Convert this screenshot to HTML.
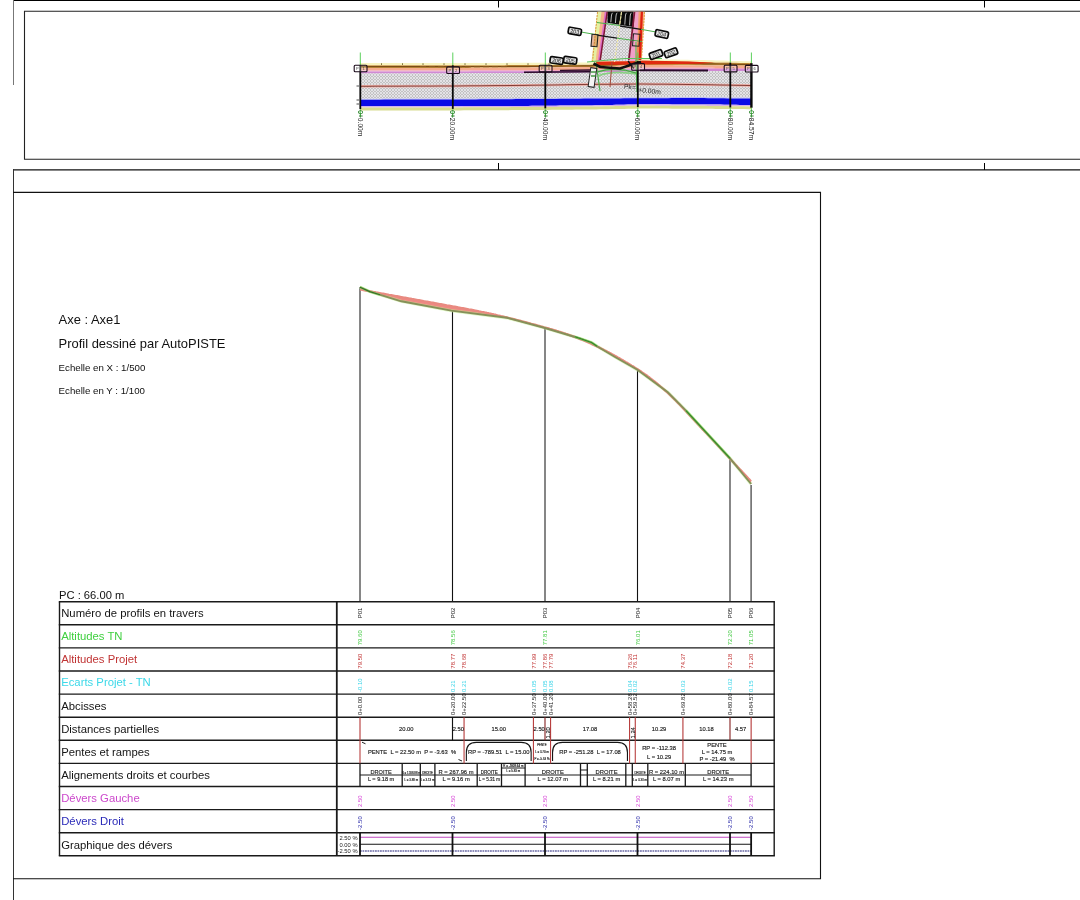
<!DOCTYPE html>
<html><head><meta charset="utf-8"><style>
html,body{margin:0;padding:0;background:#fff;width:1080px;height:900px;overflow:hidden}
svg{display:block;will-change:transform}
</style></head><body>
<svg width="1080" height="900" viewBox="0 0 1080 900">
<g fill="none" stroke="#000">
<line x1="13" y1="0.5" x2="1080" y2="0.5" stroke-width="1.2"/>
<line x1="13.5" y1="0" x2="13.5" y2="85" stroke="#777" stroke-width="1"/>
<polyline points="1080,11.3 24.5,11.3 24.5,159.3 1080,159.3" stroke="#222" stroke-width="1.1"/>
<line x1="498.5" y1="1" x2="498.5" y2="7.5" stroke-width="1"/>
<line x1="498.5" y1="163" x2="498.5" y2="170" stroke-width="1"/>
<line x1="984.5" y1="1" x2="984.5" y2="7.5" stroke-width="1"/>
<line x1="984.5" y1="163" x2="984.5" y2="170" stroke-width="1"/>
<line x1="13" y1="169.8" x2="1080" y2="169.8" stroke="#111" stroke-width="1.3"/>
<line x1="13.5" y1="169" x2="13.5" y2="900" stroke="#333" stroke-width="1"/>
<polyline points="13,192.4 820.5,192.4 820.5,878.8 13,878.8" stroke="#111" stroke-width="1.1"/>
</g>
<defs><pattern id="hatch" width="3" height="3" patternUnits="userSpaceOnUse"><rect width="3" height="3" fill="#c2c2c2"/><path d="M0,3 L3,0 M0,0 L3,3" stroke="#ecebf0" stroke-width="0.75"/></pattern></defs>
<polygon points="360.0,63.0 364.0,63.0 368.0,63.0 372.0,63.0 376.0,63.0 380.0,63.0 384.0,63.0 388.0,63.0 392.0,63.0 396.0,63.0 400.0,63.0 404.0,63.0 408.0,63.0 412.0,63.0 416.0,63.0 420.0,63.0 424.0,63.0 428.0,63.0 432.0,63.0 436.0,63.0 440.0,63.0 444.0,63.0 448.0,63.0 450.0,63.0 452.0,63.0 456.0,63.0 460.0,63.0 464.0,63.0 468.0,63.0 472.0,62.9 476.0,62.9 480.0,62.9 484.0,62.9 488.0,62.9 492.0,62.9 496.0,62.9 500.0,62.9 504.0,62.9 508.0,62.8 512.0,62.8 516.0,62.8 520.0,62.8 524.0,62.8 528.0,62.8 532.0,62.8 536.0,62.7 540.0,62.7 544.0,62.7 548.0,62.7 552.0,62.6 556.0,62.6 560.0,62.6 564.0,62.6 568.0,62.5 572.0,62.5 576.0,62.5 580.0,62.5 584.0,62.4 588.0,62.4 590.0,62.4 592.0,62.3 596.0,62.0 600.0,61.7 604.0,61.4 608.0,61.2 612.0,60.9 616.0,60.6 620.0,60.4 624.0,60.1 628.0,59.8 632.0,59.5 636.0,59.3 640.0,59.0 644.0,59.1 648.0,59.1 652.0,59.2 656.0,59.3 660.0,59.3 664.0,59.4 668.0,59.5 672.0,59.5 676.0,59.6 680.0,59.7 684.0,59.7 688.0,59.8 692.0,59.9 696.0,59.9 700.0,60.0 704.0,60.1 708.0,60.2 712.0,60.3 716.0,60.4 720.0,60.5 724.0,60.6 728.0,60.8 732.0,60.9 736.0,61.0 740.0,61.1 744.0,61.2 748.0,61.3 752.0,61.4 752.0,63.2 748.0,63.1 744.0,63.0 740.0,62.9 736.0,62.8 732.0,62.7 728.0,62.6 724.0,62.6 720.0,62.5 716.0,62.4 712.0,62.3 708.0,62.2 704.0,62.1 700.0,62.0 696.0,61.9 692.0,61.9 688.0,61.8 684.0,61.7 680.0,61.7 676.0,61.6 672.0,61.5 668.0,61.5 664.0,61.4 660.0,61.3 656.0,61.3 652.0,61.2 648.0,61.1 644.0,61.1 640.0,61.0 636.0,61.3 632.0,61.6 628.0,61.9 624.0,62.2 620.0,62.5 616.0,62.8 612.0,63.1 608.0,63.4 604.0,63.7 600.0,64.0 596.0,64.3 592.0,64.6 590.0,64.7 588.0,64.7 584.0,64.7 580.0,64.8 576.0,64.8 572.0,64.8 568.0,64.8 564.0,64.9 560.0,64.9 556.0,64.9 552.0,64.9 548.0,65.0 544.0,65.0 540.0,65.0 536.0,65.0 532.0,65.1 528.0,65.1 524.0,65.1 520.0,65.1 516.0,65.1 512.0,65.1 508.0,65.1 504.0,65.2 500.0,65.2 496.0,65.2 492.0,65.2 488.0,65.2 484.0,65.2 480.0,65.2 476.0,65.2 472.0,65.2 468.0,65.3 464.0,65.3 460.0,65.3 456.0,65.3 452.0,65.3 450.0,65.3 448.0,65.3 444.0,65.3 440.0,65.3 436.0,65.3 432.0,65.3 428.0,65.3 424.0,65.3 420.0,65.3 416.0,65.3 412.0,65.3 408.0,65.3 404.0,65.3 400.0,65.3 396.0,65.3 392.0,65.3 388.0,65.3 384.0,65.3 380.0,65.3 376.0,65.3 372.0,65.3 368.0,65.3 364.0,65.3 360.0,65.3" fill="#f8f4c0" />
<polygon points="360.0,65.3 364.0,65.3 368.0,65.3 372.0,65.3 376.0,65.3 380.0,65.3 384.0,65.3 388.0,65.3 392.0,65.3 396.0,65.3 400.0,65.3 404.0,65.3 408.0,65.3 412.0,65.3 416.0,65.3 420.0,65.3 424.0,65.3 428.0,65.3 432.0,65.3 436.0,65.3 440.0,65.3 444.0,65.3 448.0,65.3 450.0,65.3 452.0,65.3 456.0,65.3 460.0,65.3 464.0,65.3 468.0,65.3 472.0,65.2 476.0,65.2 480.0,65.2 484.0,65.2 488.0,65.2 492.0,65.2 496.0,65.2 500.0,65.2 504.0,65.2 508.0,65.1 512.0,65.1 516.0,65.1 520.0,65.1 524.0,65.1 528.0,65.1 532.0,65.1 536.0,65.0 540.0,65.0 544.0,65.0 548.0,65.0 552.0,64.9 556.0,64.9 560.0,64.9 564.0,64.9 568.0,64.8 572.0,64.8 576.0,64.8 580.0,64.8 584.0,64.7 588.0,64.7 590.0,64.7 592.0,64.6 596.0,64.3 600.0,64.0 604.0,63.7 608.0,63.4 612.0,63.1 616.0,62.8 620.0,62.5 624.0,62.2 628.0,61.9 632.0,61.6 636.0,61.3 640.0,61.0 644.0,61.1 648.0,61.1 652.0,61.2 656.0,61.3 660.0,61.3 664.0,61.4 668.0,61.5 672.0,61.5 676.0,61.6 680.0,61.7 684.0,61.7 688.0,61.8 692.0,61.9 696.0,61.9 700.0,62.0 704.0,62.1 708.0,62.2 712.0,62.3 716.0,62.4 720.0,62.5 724.0,62.6 728.0,62.6 732.0,62.7 736.0,62.8 740.0,62.9 744.0,63.0 748.0,63.1 752.0,63.2 752.0,65.8 748.0,65.8 744.0,65.7 740.0,65.7 736.0,65.7 732.0,65.6 728.0,65.6 724.0,65.6 720.0,65.6 716.0,65.5 712.0,65.5 708.0,65.5 704.0,65.4 700.0,65.4 696.0,65.4 692.0,65.3 688.0,65.3 684.0,65.2 680.0,65.2 676.0,65.2 672.0,65.1 668.0,65.1 664.0,65.0 660.0,65.0 656.0,65.0 652.0,64.9 648.0,64.9 644.0,64.8 640.0,64.8 636.0,65.0 632.0,65.2 628.0,65.3 624.0,65.5 620.0,65.7 616.0,65.9 612.0,66.0 608.0,66.2 604.0,66.4 600.0,66.6 596.0,66.7 592.0,66.9 590.0,67.0 588.0,67.0 584.0,67.1 580.0,67.1 576.0,67.1 572.0,67.2 568.0,67.2 564.0,67.3 560.0,67.3 556.0,67.4 552.0,67.4 548.0,67.4 544.0,67.5 540.0,67.5 536.0,67.6 532.0,67.6 528.0,67.7 524.0,67.7 520.0,67.7 516.0,67.7 512.0,67.7 508.0,67.7 504.0,67.8 500.0,67.8 496.0,67.8 492.0,67.8 488.0,67.8 484.0,67.8 480.0,67.8 476.0,67.8 472.0,67.8 468.0,67.9 464.0,67.9 460.0,67.9 456.0,67.9 452.0,67.9 450.0,67.9 448.0,67.9 444.0,67.9 440.0,67.9 436.0,67.9 432.0,67.9 428.0,67.9 424.0,67.9 420.0,67.9 416.0,67.9 412.0,67.9 408.0,67.9 404.0,67.9 400.0,67.9 396.0,67.9 392.0,67.9 388.0,67.9 384.0,67.9 380.0,67.9 376.0,67.9 372.0,67.9 368.0,67.9 364.0,67.9 360.0,67.9" fill="#c89440" />
<polygon points="360.0,67.9 364.0,67.9 368.0,67.9 372.0,67.9 376.0,67.9 380.0,67.9 384.0,67.9 388.0,67.9 392.0,67.9 396.0,67.9 400.0,67.9 404.0,67.9 408.0,67.9 412.0,67.9 416.0,67.9 420.0,67.9 424.0,67.9 428.0,67.9 432.0,67.9 436.0,67.9 440.0,67.9 444.0,67.9 448.0,67.9 450.0,67.9 452.0,67.9 456.0,67.9 460.0,67.9 464.0,67.9 468.0,67.9 472.0,67.8 476.0,67.8 480.0,67.8 484.0,67.8 488.0,67.8 492.0,67.8 496.0,67.8 500.0,67.8 504.0,67.8 508.0,67.7 512.0,67.7 516.0,67.7 520.0,67.7 524.0,67.7 528.0,67.7 532.0,67.6 536.0,67.6 540.0,67.5 544.0,67.5 548.0,67.4 552.0,67.4 556.0,67.4 560.0,67.3 564.0,67.3 568.0,67.2 572.0,67.2 576.0,67.1 580.0,67.1 584.0,67.1 588.0,67.0 590.0,67.0 592.0,66.9 596.0,66.7 600.0,66.6 604.0,66.4 608.0,66.2 612.0,66.0 616.0,65.9 620.0,65.7 624.0,65.5 628.0,65.3 632.0,65.2 636.0,65.0 640.0,64.8 644.0,64.8 648.0,64.9 652.0,64.9 656.0,65.0 660.0,65.0 664.0,65.0 668.0,65.1 672.0,65.1 676.0,65.2 680.0,65.2 684.0,65.2 688.0,65.3 692.0,65.3 696.0,65.4 700.0,65.4 704.0,65.4 708.0,65.5 712.0,65.5 716.0,65.5 720.0,65.6 724.0,65.6 728.0,65.6 732.0,65.6 736.0,65.7 740.0,65.7 744.0,65.7 748.0,65.8 752.0,65.8 752.0,68.0 748.0,68.0 744.0,68.0 740.0,68.0 736.0,67.9 732.0,67.9 728.0,67.9 724.0,67.9 720.0,67.9 716.0,67.9 712.0,67.8 708.0,67.8 704.0,67.8 700.0,67.8 696.0,67.8 692.0,67.8 688.0,67.8 684.0,67.8 680.0,67.8 676.0,67.8 672.0,67.8 668.0,67.8 664.0,67.8 660.0,67.8 656.0,67.8 652.0,67.8 648.0,67.8 644.0,67.8 640.0,67.8 636.0,68.0 632.0,68.2 628.0,68.3 624.0,68.5 620.0,68.7 616.0,68.9 612.0,69.0 608.0,69.2 604.0,69.4 600.0,69.6 596.0,69.7 592.0,69.9 590.0,70.0 588.0,70.0 584.0,70.0 580.0,70.0 576.0,70.0 572.0,70.1 568.0,70.1 564.0,70.1 560.0,70.1 556.0,70.1 552.0,70.1 548.0,70.1 544.0,70.1 540.0,70.2 536.0,70.2 532.0,70.2 528.0,70.2 524.0,70.2 520.0,70.2 516.0,70.2 512.0,70.2 508.0,70.2 504.0,70.3 500.0,70.3 496.0,70.3 492.0,70.3 488.0,70.3 484.0,70.3 480.0,70.3 476.0,70.3 472.0,70.3 468.0,70.4 464.0,70.4 460.0,70.4 456.0,70.4 452.0,70.4 450.0,70.4 448.0,70.4 444.0,70.4 440.0,70.4 436.0,70.4 432.0,70.4 428.0,70.4 424.0,70.4 420.0,70.4 416.0,70.4 412.0,70.4 408.0,70.4 404.0,70.4 400.0,70.4 396.0,70.4 392.0,70.4 388.0,70.4 384.0,70.4 380.0,70.4 376.0,70.4 372.0,70.4 368.0,70.4 364.0,70.4 360.0,70.4" fill="#f6ac8e" />
<polygon points="360.0,70.4 364.0,70.4 368.0,70.4 372.0,70.4 376.0,70.4 380.0,70.4 384.0,70.4 388.0,70.4 392.0,70.4 396.0,70.4 400.0,70.4 404.0,70.4 408.0,70.4 412.0,70.4 416.0,70.4 420.0,70.4 424.0,70.4 428.0,70.4 432.0,70.4 436.0,70.4 440.0,70.4 444.0,70.4 448.0,70.4 450.0,70.4 452.0,70.4 456.0,70.4 460.0,70.4 464.0,70.4 468.0,70.4 472.0,70.3 476.0,70.3 480.0,70.3 484.0,70.3 488.0,70.3 492.0,70.3 496.0,70.3 500.0,70.3 504.0,70.3 508.0,70.2 512.0,70.2 516.0,70.2 520.0,70.2 524.0,70.2 528.0,70.2 532.0,70.2 536.0,70.2 540.0,70.2 544.0,70.1 548.0,70.1 552.0,70.1 556.0,70.1 560.0,70.1 564.0,70.1 568.0,70.1 572.0,70.1 576.0,70.0 580.0,70.0 584.0,70.0 588.0,70.0 590.0,70.0 592.0,69.9 596.0,69.7 600.0,69.6 604.0,69.4 608.0,69.2 612.0,69.0 616.0,68.9 620.0,68.7 624.0,68.5 628.0,68.3 632.0,68.2 636.0,68.0 640.0,67.8 644.0,67.8 648.0,67.8 652.0,67.8 656.0,67.8 660.0,67.8 664.0,67.8 668.0,67.8 672.0,67.8 676.0,67.8 680.0,67.8 684.0,67.8 688.0,67.8 692.0,67.8 696.0,67.8 700.0,67.8 704.0,67.8 708.0,67.8 712.0,67.8 716.0,67.9 720.0,67.9 724.0,67.9 728.0,67.9 732.0,67.9 736.0,67.9 740.0,68.0 744.0,68.0 748.0,68.0 752.0,68.0 752.0,69.0 748.0,69.0 744.0,69.0 740.0,69.0 736.0,68.9 732.0,68.9 728.0,68.9 724.0,68.9 720.0,68.9 716.0,68.9 712.0,68.8 708.0,68.8 704.0,68.8 700.0,68.8 696.0,68.8 692.0,68.8 688.0,68.8 684.0,68.8 680.0,68.8 676.0,68.8 672.0,68.8 668.0,68.8 664.0,68.8 660.0,68.8 656.0,68.8 652.0,68.8 648.0,68.8 644.0,68.8 640.0,68.8 636.0,69.0 632.0,69.2 628.0,69.3 624.0,69.5 620.0,69.7 616.0,69.9 612.0,70.0 608.0,70.2 604.0,70.4 600.0,70.6 596.0,70.7 592.0,70.9 590.0,71.0 588.0,71.0 584.0,71.0 580.0,71.0 576.0,71.0 572.0,71.1 568.0,71.1 564.0,71.1 560.0,71.1 556.0,71.1 552.0,71.1 548.0,71.1 544.0,71.1 540.0,71.2 536.0,71.2 532.0,71.2 528.0,71.2 524.0,71.2 520.0,71.2 516.0,71.2 512.0,71.2 508.0,71.2 504.0,71.3 500.0,71.3 496.0,71.3 492.0,71.3 488.0,71.3 484.0,71.3 480.0,71.3 476.0,71.3 472.0,71.3 468.0,71.4 464.0,71.4 460.0,71.4 456.0,71.4 452.0,71.4 450.0,71.4 448.0,71.4 444.0,71.4 440.0,71.4 436.0,71.4 432.0,71.4 428.0,71.4 424.0,71.4 420.0,71.4 416.0,71.4 412.0,71.4 408.0,71.4 404.0,71.4 400.0,71.4 396.0,71.4 392.0,71.4 388.0,71.4 384.0,71.4 380.0,71.4 376.0,71.4 372.0,71.4 368.0,71.4 364.0,71.4 360.0,71.4" fill="#f0a0c0" />
<polygon points="360.0,71.4 364.0,71.4 368.0,71.4 372.0,71.4 376.0,71.4 380.0,71.4 384.0,71.4 388.0,71.4 392.0,71.4 396.0,71.4 400.0,71.4 404.0,71.4 408.0,71.4 412.0,71.4 416.0,71.4 420.0,71.4 424.0,71.4 428.0,71.4 432.0,71.4 436.0,71.4 440.0,71.4 444.0,71.4 448.0,71.4 450.0,71.4 452.0,71.4 456.0,71.4 460.0,71.4 464.0,71.4 468.0,71.4 472.0,71.3 476.0,71.3 480.0,71.3 484.0,71.3 488.0,71.3 492.0,71.3 496.0,71.3 500.0,71.3 504.0,71.3 508.0,71.2 512.0,71.2 516.0,71.2 520.0,71.2 524.0,71.2 528.0,71.2 532.0,71.2 536.0,71.2 540.0,71.2 544.0,71.1 548.0,71.1 552.0,71.1 556.0,71.1 560.0,71.1 564.0,71.1 568.0,71.1 572.0,71.1 576.0,71.0 580.0,71.0 584.0,71.0 588.0,71.0 590.0,71.0 592.0,70.9 596.0,70.7 600.0,70.6 604.0,70.4 608.0,70.2 612.0,70.0 616.0,69.9 620.0,69.7 624.0,69.5 628.0,69.3 632.0,69.2 636.0,69.0 640.0,68.8 644.0,68.8 648.0,68.8 652.0,68.8 656.0,68.8 660.0,68.8 664.0,68.8 668.0,68.8 672.0,68.8 676.0,68.8 680.0,68.8 684.0,68.8 688.0,68.8 692.0,68.8 696.0,68.8 700.0,68.8 704.0,68.8 708.0,68.8 712.0,68.8 716.0,68.9 720.0,68.9 724.0,68.9 728.0,68.9 732.0,68.9 736.0,68.9 740.0,69.0 744.0,69.0 748.0,69.0 752.0,69.0 752.0,71.2 748.0,71.2 744.0,71.2 740.0,71.2 736.0,71.1 732.0,71.1 728.0,71.1 724.0,71.1 720.0,71.1 716.0,71.1 712.0,71.0 708.0,71.0 704.0,71.0 700.0,71.0 696.0,71.0 692.0,71.1 688.0,71.1 684.0,71.1 680.0,71.1 676.0,71.2 672.0,71.2 668.0,71.2 664.0,71.2 660.0,71.3 656.0,71.3 652.0,71.3 648.0,71.3 644.0,71.4 640.0,71.4 636.0,71.5 632.0,71.6 628.0,71.7 624.0,71.8 620.0,71.9 616.0,72.0 612.0,72.1 608.0,72.2 604.0,72.3 600.0,72.4 596.0,72.5 592.0,72.6 590.0,72.6 588.0,72.6 584.0,72.6 580.0,72.7 576.0,72.7 572.0,72.7 568.0,72.8 564.0,72.8 560.0,72.8 556.0,72.9 552.0,72.9 548.0,72.9 544.0,72.9 540.0,73.0 536.0,73.0 532.0,73.0 528.0,73.1 524.0,73.1 520.0,73.1 516.0,73.1 512.0,73.1 508.0,73.2 504.0,73.2 500.0,73.2 496.0,73.2 492.0,73.2 488.0,73.2 484.0,73.3 480.0,73.3 476.0,73.3 472.0,73.3 468.0,73.3 464.0,73.3 460.0,73.4 456.0,73.4 452.0,73.4 450.0,73.4 448.0,73.4 444.0,73.4 440.0,73.4 436.0,73.4 432.0,73.4 428.0,73.4 424.0,73.4 420.0,73.4 416.0,73.4 412.0,73.4 408.0,73.4 404.0,73.4 400.0,73.4 396.0,73.4 392.0,73.4 388.0,73.4 384.0,73.4 380.0,73.4 376.0,73.4 372.0,73.4 368.0,73.4 364.0,73.4 360.0,73.4" fill="#d08ad4" />
<polygon points="360.0,73.4 364.0,73.4 368.0,73.4 372.0,73.4 376.0,73.4 380.0,73.4 384.0,73.4 388.0,73.4 392.0,73.4 396.0,73.4 400.0,73.4 404.0,73.4 408.0,73.4 412.0,73.4 416.0,73.4 420.0,73.4 424.0,73.4 428.0,73.4 432.0,73.4 436.0,73.4 440.0,73.4 444.0,73.4 448.0,73.4 450.0,73.4 452.0,73.4 456.0,73.4 460.0,73.4 464.0,73.3 468.0,73.3 472.0,73.3 476.0,73.3 480.0,73.3 484.0,73.3 488.0,73.2 492.0,73.2 496.0,73.2 500.0,73.2 504.0,73.2 508.0,73.2 512.0,73.1 516.0,73.1 520.0,73.1 524.0,73.1 528.0,73.1 532.0,73.0 536.0,73.0 540.0,73.0 544.0,72.9 548.0,72.9 552.0,72.9 556.0,72.9 560.0,72.8 564.0,72.8 568.0,72.8 572.0,72.7 576.0,72.7 580.0,72.7 584.0,72.6 588.0,72.6 590.0,72.6 592.0,72.6 596.0,72.5 600.0,72.4 604.0,72.3 608.0,72.2 612.0,72.1 616.0,72.0 620.0,71.9 624.0,71.8 628.0,71.7 632.0,71.6 636.0,71.5 640.0,71.4 644.0,71.4 648.0,71.3 652.0,71.3 656.0,71.3 660.0,71.3 664.0,71.2 668.0,71.2 672.0,71.2 676.0,71.2 680.0,71.1 684.0,71.1 688.0,71.1 692.0,71.1 696.0,71.0 700.0,71.0 704.0,71.0 708.0,71.0 712.0,71.0 716.0,71.1 720.0,71.1 724.0,71.1 728.0,71.1 732.0,71.1 736.0,71.1 740.0,71.2 744.0,71.2 748.0,71.2 752.0,71.2 752.0,97.6 748.0,97.6 744.0,97.5 740.0,97.5 736.0,97.4 732.0,97.4 728.0,97.4 724.0,97.3 720.0,97.3 716.0,97.3 712.0,97.2 708.0,97.2 704.0,97.1 700.0,97.1 696.0,97.1 692.0,97.1 688.0,97.1 684.0,97.1 680.0,97.1 676.0,97.1 672.0,97.1 668.0,97.2 664.0,97.2 660.0,97.2 656.0,97.2 652.0,97.2 648.0,97.2 644.0,97.2 640.0,97.2 636.0,97.2 632.0,97.3 628.0,97.3 624.0,97.3 620.0,97.4 616.0,97.4 612.0,97.4 608.0,97.5 604.0,97.5 600.0,97.5 596.0,97.6 592.0,97.6 590.0,97.6 588.0,97.6 584.0,97.6 580.0,97.7 576.0,97.7 572.0,97.7 568.0,97.8 564.0,97.8 560.0,97.8 556.0,97.9 552.0,97.9 548.0,97.9 544.0,97.9 540.0,98.0 536.0,98.0 532.0,98.0 528.0,98.1 524.0,98.1 520.0,98.1 516.0,98.1 512.0,98.2 508.0,98.2 504.0,98.2 500.0,98.2 496.0,98.3 492.0,98.3 488.0,98.3 484.0,98.3 480.0,98.3 476.0,98.4 472.0,98.4 468.0,98.4 464.0,98.4 460.0,98.4 456.0,98.5 452.0,98.5 450.0,98.5 448.0,98.5 444.0,98.5 440.0,98.5 436.0,98.5 432.0,98.5 428.0,98.5 424.0,98.6 420.0,98.6 416.0,98.6 412.0,98.6 408.0,98.6 404.0,98.6 400.0,98.6 396.0,98.6 392.0,98.6 388.0,98.6 384.0,98.6 380.0,98.7 376.0,98.7 372.0,98.7 368.0,98.7 364.0,98.7 360.0,98.7" fill="url(#hatch)" />
<polygon points="360.0,98.7 364.0,98.7 368.0,98.7 372.0,98.7 376.0,98.7 380.0,98.7 384.0,98.6 388.0,98.6 392.0,98.6 396.0,98.6 400.0,98.6 404.0,98.6 408.0,98.6 412.0,98.6 416.0,98.6 420.0,98.6 424.0,98.6 428.0,98.5 432.0,98.5 436.0,98.5 440.0,98.5 444.0,98.5 448.0,98.5 450.0,98.5 452.0,98.5 456.0,98.5 460.0,98.4 464.0,98.4 468.0,98.4 472.0,98.4 476.0,98.4 480.0,98.3 484.0,98.3 488.0,98.3 492.0,98.3 496.0,98.3 500.0,98.2 504.0,98.2 508.0,98.2 512.0,98.2 516.0,98.1 520.0,98.1 524.0,98.1 528.0,98.1 532.0,98.0 536.0,98.0 540.0,98.0 544.0,97.9 548.0,97.9 552.0,97.9 556.0,97.9 560.0,97.8 564.0,97.8 568.0,97.8 572.0,97.7 576.0,97.7 580.0,97.7 584.0,97.6 588.0,97.6 590.0,97.6 592.0,97.6 596.0,97.6 600.0,97.5 604.0,97.5 608.0,97.5 612.0,97.4 616.0,97.4 620.0,97.4 624.0,97.3 628.0,97.3 632.0,97.3 636.0,97.2 640.0,97.2 644.0,97.2 648.0,97.2 652.0,97.2 656.0,97.2 660.0,97.2 664.0,97.2 668.0,97.2 672.0,97.1 676.0,97.1 680.0,97.1 684.0,97.1 688.0,97.1 692.0,97.1 696.0,97.1 700.0,97.1 704.0,97.1 708.0,97.2 712.0,97.2 716.0,97.3 720.0,97.3 724.0,97.3 728.0,97.4 732.0,97.4 736.0,97.4 740.0,97.5 744.0,97.5 748.0,97.6 752.0,97.6 752.0,98.6 748.0,98.6 744.0,98.5 740.0,98.5 736.0,98.4 732.0,98.4 728.0,98.4 724.0,98.3 720.0,98.3 716.0,98.3 712.0,98.2 708.0,98.2 704.0,98.1 700.0,98.1 696.0,98.1 692.0,98.1 688.0,98.1 684.0,98.1 680.0,98.1 676.0,98.1 672.0,98.1 668.0,98.2 664.0,98.2 660.0,98.2 656.0,98.2 652.0,98.2 648.0,98.2 644.0,98.2 640.0,98.2 636.0,98.2 632.0,98.3 628.0,98.3 624.0,98.3 620.0,98.4 616.0,98.4 612.0,98.4 608.0,98.5 604.0,98.5 600.0,98.5 596.0,98.6 592.0,98.6 590.0,98.6 588.0,98.6 584.0,98.6 580.0,98.7 576.0,98.7 572.0,98.7 568.0,98.8 564.0,98.8 560.0,98.8 556.0,98.9 552.0,98.9 548.0,98.9 544.0,98.9 540.0,99.0 536.0,99.0 532.0,99.0 528.0,99.1 524.0,99.1 520.0,99.1 516.0,99.1 512.0,99.2 508.0,99.2 504.0,99.2 500.0,99.2 496.0,99.3 492.0,99.3 488.0,99.3 484.0,99.3 480.0,99.3 476.0,99.4 472.0,99.4 468.0,99.4 464.0,99.4 460.0,99.4 456.0,99.5 452.0,99.5 450.0,99.5 448.0,99.5 444.0,99.5 440.0,99.5 436.0,99.5 432.0,99.5 428.0,99.5 424.0,99.6 420.0,99.6 416.0,99.6 412.0,99.6 408.0,99.6 404.0,99.6 400.0,99.6 396.0,99.6 392.0,99.6 388.0,99.6 384.0,99.6 380.0,99.7 376.0,99.7 372.0,99.7 368.0,99.7 364.0,99.7 360.0,99.7" fill="#b8b8f0" />
<polygon points="360.0,99.7 364.0,99.7 368.0,99.7 372.0,99.7 376.0,99.7 380.0,99.7 384.0,99.6 388.0,99.6 392.0,99.6 396.0,99.6 400.0,99.6 404.0,99.6 408.0,99.6 412.0,99.6 416.0,99.6 420.0,99.6 424.0,99.6 428.0,99.5 432.0,99.5 436.0,99.5 440.0,99.5 444.0,99.5 448.0,99.5 450.0,99.5 452.0,99.5 456.0,99.5 460.0,99.4 464.0,99.4 468.0,99.4 472.0,99.4 476.0,99.4 480.0,99.3 484.0,99.3 488.0,99.3 492.0,99.3 496.0,99.3 500.0,99.2 504.0,99.2 508.0,99.2 512.0,99.2 516.0,99.1 520.0,99.1 524.0,99.1 528.0,99.1 532.0,99.0 536.0,99.0 540.0,99.0 544.0,98.9 548.0,98.9 552.0,98.9 556.0,98.9 560.0,98.8 564.0,98.8 568.0,98.8 572.0,98.7 576.0,98.7 580.0,98.7 584.0,98.6 588.0,98.6 590.0,98.6 592.0,98.6 596.0,98.6 600.0,98.5 604.0,98.5 608.0,98.5 612.0,98.4 616.0,98.4 620.0,98.4 624.0,98.3 628.0,98.3 632.0,98.3 636.0,98.2 640.0,98.2 644.0,98.2 648.0,98.2 652.0,98.2 656.0,98.2 660.0,98.2 664.0,98.2 668.0,98.2 672.0,98.1 676.0,98.1 680.0,98.1 684.0,98.1 688.0,98.1 692.0,98.1 696.0,98.1 700.0,98.1 704.0,98.1 708.0,98.2 712.0,98.2 716.0,98.3 720.0,98.3 724.0,98.3 728.0,98.4 732.0,98.4 736.0,98.4 740.0,98.5 744.0,98.5 748.0,98.6 752.0,98.6 752.0,105.0 748.0,105.0 744.0,104.9 740.0,104.9 736.0,104.8 732.0,104.8 728.0,104.7 724.0,104.7 720.0,104.6 716.0,104.6 712.0,104.5 708.0,104.5 704.0,104.4 700.0,104.4 696.0,104.4 692.0,104.4 688.0,104.4 684.0,104.4 680.0,104.4 676.0,104.4 672.0,104.4 668.0,104.3 664.0,104.3 660.0,104.3 656.0,104.3 652.0,104.3 648.0,104.3 644.0,104.3 640.0,104.3 636.0,104.4 632.0,104.5 628.0,104.6 624.0,104.7 620.0,104.7 616.0,104.8 612.0,104.9 608.0,105.0 604.0,105.1 600.0,105.2 596.0,105.3 592.0,105.4 590.0,105.4 588.0,105.4 584.0,105.4 580.0,105.5 576.0,105.5 572.0,105.5 568.0,105.6 564.0,105.6 560.0,105.6 556.0,105.7 552.0,105.7 548.0,105.7 544.0,105.7 540.0,105.8 536.0,105.8 532.0,105.8 528.0,105.9 524.0,105.9 520.0,105.9 516.0,105.9 512.0,105.9 508.0,106.0 504.0,106.0 500.0,106.0 496.0,106.0 492.0,106.0 488.0,106.0 484.0,106.1 480.0,106.1 476.0,106.1 472.0,106.1 468.0,106.1 464.0,106.1 460.0,106.2 456.0,106.2 452.0,106.2 450.0,106.2 448.0,106.2 444.0,106.2 440.0,106.2 436.0,106.2 432.0,106.2 428.0,106.2 424.0,106.2 420.0,106.2 416.0,106.2 412.0,106.2 408.0,106.2 404.0,106.2 400.0,106.2 396.0,106.2 392.0,106.2 388.0,106.2 384.0,106.2 380.0,106.2 376.0,106.2 372.0,106.2 368.0,106.2 364.0,106.2 360.0,106.2" fill="#0a0ae6" />
<polygon points="360.0,106.2 364.0,106.2 368.0,106.2 372.0,106.2 376.0,106.2 380.0,106.2 384.0,106.2 388.0,106.2 392.0,106.2 396.0,106.2 400.0,106.2 404.0,106.2 408.0,106.2 412.0,106.2 416.0,106.2 420.0,106.2 424.0,106.2 428.0,106.2 432.0,106.2 436.0,106.2 440.0,106.2 444.0,106.2 448.0,106.2 450.0,106.2 452.0,106.2 456.0,106.2 460.0,106.2 464.0,106.1 468.0,106.1 472.0,106.1 476.0,106.1 480.0,106.1 484.0,106.1 488.0,106.0 492.0,106.0 496.0,106.0 500.0,106.0 504.0,106.0 508.0,106.0 512.0,105.9 516.0,105.9 520.0,105.9 524.0,105.9 528.0,105.9 532.0,105.8 536.0,105.8 540.0,105.8 544.0,105.7 548.0,105.7 552.0,105.7 556.0,105.7 560.0,105.6 564.0,105.6 568.0,105.6 572.0,105.5 576.0,105.5 580.0,105.5 584.0,105.4 588.0,105.4 590.0,105.4 592.0,105.4 596.0,105.3 600.0,105.2 604.0,105.1 608.0,105.0 612.0,104.9 616.0,104.8 620.0,104.7 624.0,104.7 628.0,104.6 632.0,104.5 636.0,104.4 640.0,104.3 644.0,104.3 648.0,104.3 652.0,104.3 656.0,104.3 660.0,104.3 664.0,104.3 668.0,104.3 672.0,104.4 676.0,104.4 680.0,104.4 684.0,104.4 688.0,104.4 692.0,104.4 696.0,104.4 700.0,104.4 704.0,104.4 708.0,104.5 712.0,104.5 716.0,104.6 720.0,104.6 724.0,104.7 728.0,104.7 732.0,104.8 736.0,104.8 740.0,104.9 744.0,104.9 748.0,105.0 752.0,105.0 752.0,106.4 748.0,106.4 744.0,106.3 740.0,106.3 736.0,106.2 732.0,106.2 728.0,106.1 724.0,106.1 720.0,106.0 716.0,106.0 712.0,105.9 708.0,105.9 704.0,105.8 700.0,105.8 696.0,105.8 692.0,105.8 688.0,105.8 684.0,105.7 680.0,105.7 676.0,105.7 672.0,105.7 668.0,105.7 664.0,105.7 660.0,105.7 656.0,105.7 652.0,105.6 648.0,105.6 644.0,105.6 640.0,105.6 636.0,105.7 632.0,105.8 628.0,105.8 624.0,105.9 620.0,106.0 616.0,106.1 612.0,106.2 608.0,106.2 604.0,106.3 600.0,106.4 596.0,106.5 592.0,106.6 590.0,106.6 588.0,106.6 584.0,106.6 580.0,106.7 576.0,106.7 572.0,106.7 568.0,106.8 564.0,106.8 560.0,106.8 556.0,106.9 552.0,106.9 548.0,106.9 544.0,106.9 540.0,107.0 536.0,107.0 532.0,107.0 528.0,107.1 524.0,107.1 520.0,107.1 516.0,107.1 512.0,107.1 508.0,107.2 504.0,107.2 500.0,107.2 496.0,107.2 492.0,107.2 488.0,107.2 484.0,107.3 480.0,107.3 476.0,107.3 472.0,107.3 468.0,107.3 464.0,107.3 460.0,107.4 456.0,107.4 452.0,107.4 450.0,107.4 448.0,107.4 444.0,107.4 440.0,107.4 436.0,107.4 432.0,107.4 428.0,107.4 424.0,107.4 420.0,107.4 416.0,107.4 412.0,107.4 408.0,107.4 404.0,107.4 400.0,107.4 396.0,107.4 392.0,107.4 388.0,107.4 384.0,107.4 380.0,107.4 376.0,107.4 372.0,107.4 368.0,107.4 364.0,107.4 360.0,107.4" fill="#d8b0e8" />
<polygon points="360.0,107.4 364.0,107.4 368.0,107.4 372.0,107.4 376.0,107.4 380.0,107.4 384.0,107.4 388.0,107.4 392.0,107.4 396.0,107.4 400.0,107.4 404.0,107.4 408.0,107.4 412.0,107.4 416.0,107.4 420.0,107.4 424.0,107.4 428.0,107.4 432.0,107.4 436.0,107.4 440.0,107.4 444.0,107.4 448.0,107.4 450.0,107.4 452.0,107.4 456.0,107.4 460.0,107.4 464.0,107.3 468.0,107.3 472.0,107.3 476.0,107.3 480.0,107.3 484.0,107.3 488.0,107.2 492.0,107.2 496.0,107.2 500.0,107.2 504.0,107.2 508.0,107.2 512.0,107.1 516.0,107.1 520.0,107.1 524.0,107.1 528.0,107.1 532.0,107.0 536.0,107.0 540.0,107.0 544.0,106.9 548.0,106.9 552.0,106.9 556.0,106.9 560.0,106.8 564.0,106.8 568.0,106.8 572.0,106.7 576.0,106.7 580.0,106.7 584.0,106.6 588.0,106.6 590.0,106.6 592.0,106.6 596.0,106.5 600.0,106.4 604.0,106.3 608.0,106.2 612.0,106.2 616.0,106.1 620.0,106.0 624.0,105.9 628.0,105.8 632.0,105.8 636.0,105.7 640.0,105.6 644.0,105.6 648.0,105.6 652.0,105.6 656.0,105.7 660.0,105.7 664.0,105.7 668.0,105.7 672.0,105.7 676.0,105.7 680.0,105.7 684.0,105.7 688.0,105.8 692.0,105.8 696.0,105.8 700.0,105.8 704.0,105.8 708.0,105.9 712.0,105.9 716.0,106.0 720.0,106.0 724.0,106.1 728.0,106.1 732.0,106.2 736.0,106.2 740.0,106.3 744.0,106.3 748.0,106.4 752.0,106.4 752.0,109.2 748.0,109.2 744.0,109.1 740.0,109.1 736.0,109.0 732.0,109.0 728.0,109.0 724.0,108.9 720.0,108.9 716.0,108.9 712.0,108.8 708.0,108.8 704.0,108.7 700.0,108.7 696.0,108.7 692.0,108.7 688.0,108.7 684.0,108.7 680.0,108.7 676.0,108.7 672.0,108.7 668.0,108.6 664.0,108.6 660.0,108.6 656.0,108.6 652.0,108.6 648.0,108.6 644.0,108.6 640.0,108.6 636.0,108.7 632.0,108.7 628.0,108.8 624.0,108.9 620.0,109.0 616.0,109.0 612.0,109.1 608.0,109.2 604.0,109.2 600.0,109.3 596.0,109.4 592.0,109.5 590.0,109.5 588.0,109.5 584.0,109.6 580.0,109.6 576.0,109.6 572.0,109.7 568.0,109.7 564.0,109.7 560.0,109.8 556.0,109.8 552.0,109.8 548.0,109.9 544.0,109.9 540.0,110.0 536.0,110.0 532.0,110.0 528.0,110.1 524.0,110.1 520.0,110.1 516.0,110.1 512.0,110.1 508.0,110.2 504.0,110.2 500.0,110.2 496.0,110.2 492.0,110.2 488.0,110.2 484.0,110.3 480.0,110.3 476.0,110.3 472.0,110.3 468.0,110.3 464.0,110.3 460.0,110.4 456.0,110.4 452.0,110.4 450.0,110.4 448.0,110.4 444.0,110.4 440.0,110.4 436.0,110.4 432.0,110.4 428.0,110.4 424.0,110.5 420.0,110.5 416.0,110.5 412.0,110.5 408.0,110.5 404.0,110.5 400.0,110.5 396.0,110.5 392.0,110.5 388.0,110.5 384.0,110.5 380.0,110.6 376.0,110.6 372.0,110.6 368.0,110.6 364.0,110.6 360.0,110.6" fill="#d8dc90" />
<polyline points="360.0,66.6 368.0,66.6 376.0,66.6 384.0,66.6 392.0,66.6 400.0,66.6 408.0,66.6 416.0,66.6 424.0,66.6 432.0,66.6 440.0,66.6 448.0,66.6 450.0,66.6 456.0,66.6 464.0,66.6 472.0,66.5 480.0,66.5 488.0,66.5 496.0,66.5 504.0,66.5 512.0,66.4 520.0,66.4 524.0,66.4 528.0,66.4 536.0,66.3 544.0,66.2 552.0,66.2 560.0,66.1 568.0,66.0 576.0,66.0 584.0,65.9 590.0,65.8 592.0,65.7 600.0,65.3 608.0,64.8 616.0,64.3 624.0,63.8 632.0,63.4 640.0,62.9 648.0,63.0 656.0,63.1 664.0,63.2 672.0,63.3 680.0,63.4 688.0,63.5 696.0,63.6 700.0,63.7 704.0,63.8 712.0,63.9 720.0,64.0 728.0,64.1 736.0,64.3 744.0,64.4 752.0,64.5" fill="none" stroke="#7a4c14" stroke-width="1.2" />
<polyline points="360.0,85.5 368.0,85.5 376.0,85.4 384.0,85.4 392.0,85.4 400.0,85.4 408.0,85.3 416.0,85.3 424.0,85.3 432.0,85.3 440.0,85.2 448.0,85.2 450.0,85.2 456.0,85.2 464.0,85.1 472.0,85.0 480.0,85.0 488.0,84.9 496.0,84.8 504.0,84.8 512.0,84.7 520.0,84.6 524.0,84.6 528.0,84.5 536.0,84.4 544.0,84.3 552.0,84.2 560.0,84.1 568.0,83.9 576.0,83.8 584.0,83.7 590.0,83.6 592.0,83.6 600.0,83.5 608.0,83.5 616.0,83.4 624.0,83.3 632.0,83.3 640.0,83.2 648.0,83.3 656.0,83.4 664.0,83.4 672.0,83.5 680.0,83.6 688.0,83.7 696.0,83.8 700.0,83.8 704.0,83.9 712.0,84.0 720.0,84.2 728.0,84.3 736.0,84.5 744.0,84.6 752.0,84.8" fill="none" stroke="#f0b0a8" stroke-width="1.0" />
<polyline points="360.0,87.1 368.0,87.1 376.0,87.0 384.0,87.0 392.0,87.0 400.0,87.0 408.0,86.9 416.0,86.9 424.0,86.9 432.0,86.9 440.0,86.8 448.0,86.8 450.0,86.8 456.0,86.8 464.0,86.7 472.0,86.6 480.0,86.6 488.0,86.5 496.0,86.4 504.0,86.4 512.0,86.3 520.0,86.2 524.0,86.2 528.0,86.1 536.0,86.0 544.0,85.9 552.0,85.8 560.0,85.7 568.0,85.5 576.0,85.4 584.0,85.3 590.0,85.2 592.0,85.2 600.0,85.1 608.0,85.1 616.0,85.0 624.0,84.9 632.0,84.9 640.0,84.8 648.0,84.9 656.0,85.0 664.0,85.0 672.0,85.1 680.0,85.2 688.0,85.3 696.0,85.4 700.0,85.4 704.0,85.5 712.0,85.6 720.0,85.8 728.0,85.9 736.0,86.1 744.0,86.2 752.0,86.4" fill="none" stroke="#f0b0a8" stroke-width="1.0" />
<polyline points="360.0,86.3 368.0,86.3 376.0,86.2 384.0,86.2 392.0,86.2 400.0,86.2 408.0,86.1 416.0,86.1 424.0,86.1 432.0,86.1 440.0,86.0 448.0,86.0 450.0,86.0 456.0,86.0 464.0,85.9 472.0,85.8 480.0,85.8 488.0,85.7 496.0,85.6 504.0,85.6 512.0,85.5 520.0,85.4 524.0,85.4 528.0,85.3 536.0,85.2 544.0,85.1 552.0,85.0 560.0,84.9 568.0,84.7 576.0,84.6 584.0,84.5 590.0,84.4 592.0,84.4 600.0,84.3 608.0,84.3 616.0,84.2 624.0,84.1 632.0,84.1 640.0,84.0 648.0,84.1 656.0,84.2 664.0,84.2 672.0,84.3 680.0,84.4 688.0,84.5 696.0,84.6 700.0,84.6 704.0,84.7 712.0,84.8 720.0,85.0 728.0,85.1 736.0,85.3 744.0,85.4 752.0,85.6" fill="none" stroke="#7a2c24" stroke-width="0.9" />
<polygon points="596,61 640,60.6 690,61.4 714,62.8 700,63.8 640,64.4 596,65" fill="#e02a10"/>
<polyline points="524,72.2 590,71.8" stroke="#2a0a2a" stroke-width="1.5" fill="none"/>
<polyline points="640,70.2 708,70.6" stroke="#2a0a2a" stroke-width="2" fill="none"/>
<line x1="381.5" y1="63.2" x2="381.5" y2="65" stroke="#6a5a2a" stroke-width="0.8"/>
<line x1="402.5" y1="63.2" x2="402.5" y2="65" stroke="#6a5a2a" stroke-width="0.8"/>
<line x1="423" y1="63.2" x2="423" y2="65" stroke="#6a5a2a" stroke-width="0.8"/>
<line x1="444" y1="63.2" x2="444" y2="65" stroke="#6a5a2a" stroke-width="0.8"/>
<line x1="465" y1="63.2" x2="465" y2="65" stroke="#6a5a2a" stroke-width="0.8"/>
<line x1="486" y1="63.2" x2="486" y2="65" stroke="#6a5a2a" stroke-width="0.8"/>
<line x1="507" y1="63.2" x2="507" y2="65" stroke="#6a5a2a" stroke-width="0.8"/>
<line x1="528" y1="63.2" x2="528" y2="65" stroke="#6a5a2a" stroke-width="0.8"/>
<line x1="549" y1="63.2" x2="549" y2="65" stroke="#6a5a2a" stroke-width="0.8"/>
<line x1="570" y1="63.2" x2="570" y2="65" stroke="#6a5a2a" stroke-width="0.8"/>
<polyline points="420,66.5 470,66.8 510,66.6" stroke="#8a5a20" stroke-width="1" stroke-dasharray="6,3" fill="none"/>
<polygon points="597.5,11.8 645,11.8 641.5,61 591.5,62" fill="#f6b48c"/>
<polygon points="597.5,11.8 601.5,11.8 595.5,62 591.5,62" fill="#e6f0a0"/>
<polygon points="604.8,11.8 607.2,11.8 600.2,61 597.8,61" fill="#e070c8"/>
<polygon points="607,11.8 635.5,11.8 629,61 600.5,61" fill="url(#hatch)"/>
<polygon points="635.5,11.8 639.5,11.8 636.5,61 629,61" fill="#f0a0c8"/>
<polygon points="640.5,11.8 643,11.8 641.2,60 636.2,60" fill="#e02010"/>
<polygon points="607.5,11.8 633.5,11.8 633.5,27 607.5,22.8" fill="#0a0a0a"/>
<path d="M612.6,12.8 Q611.6,13.5 611.4,16 L610.8,22.3" stroke="#e8e8e8" stroke-width="0.8" fill="none"/>
<path d="M617.2,12.8 Q616.2,13.5 616.0,16 L615.4,23.0" stroke="#e8e8e8" stroke-width="0.8" fill="none"/>
<path d="M626.6,12.8 Q625.6,13.5 625.4,16 L624.8,24.6" stroke="#e8e8e8" stroke-width="0.8" fill="none"/>
<path d="M631.4,12.8 Q630.4,13.5 630.2,16 L629.6,25.3" stroke="#e8e8e8" stroke-width="0.8" fill="none"/>
<line x1="607.2" y1="12" x2="600.2" y2="60" stroke="#801838" stroke-width="1.6"/>
<line x1="634.5" y1="12" x2="628.8" y2="60" stroke="#801838" stroke-width="1.8"/>
<line x1="621.5" y1="12" x2="614.5" y2="62" stroke="#f0e8a0" stroke-width="1.1" stroke-dasharray="3,1.5"/>
<line x1="621.5" y1="12" x2="619.3" y2="27" stroke="#e8e0a0" stroke-width="0.9"/>
<line x1="597.5" y1="12" x2="592.5" y2="62" stroke="#d89030" stroke-width="0.9" stroke-dasharray="2,1"/>
<line x1="644.5" y1="12" x2="641.5" y2="60" stroke="#e0a030" stroke-width="0.9" stroke-dasharray="2,1"/>
<line x1="636" y1="42" x2="636" y2="60" stroke="#6ac04a" stroke-width="1.2"/>
<polygon points="638.6,11.8 640.8,11.8 638.6,60 636.6,60" fill="#f4a060" opacity="0.8"/>
<polyline points="581,32 597,34.8" stroke="#4ab04a" stroke-width="1" fill="none"/>
<polyline points="597,35.2 617,38.2" stroke="#151515" stroke-width="1.3" fill="none"/>
<polyline points="617,38.2 642,41.5" stroke="#4ab04a" stroke-width="1" fill="none"/>
<polyline points="597,22.5 620,25.5" stroke="#4ab04a" stroke-width="1" fill="none"/>
<polyline points="620,26 641,29.3" stroke="#151515" stroke-width="1.3" fill="none"/>
<polyline points="641,29.3 656,32" stroke="#4ab04a" stroke-width="1" fill="none"/>
<polyline points="587,62 625,58.5 662,58.5" stroke="#5ac05a" stroke-width="1" fill="none"/>
<polyline points="596,62.5 600,91" stroke="#4ab04a" stroke-width="1.2" fill="none"/>
<polyline points="636,60 637,92" stroke="#4ab04a" stroke-width="1.2" fill="none"/>
<path d="M597,72 Q615,66 636,73" stroke="#78d070" stroke-width="2.2" fill="none" opacity="0.8"/>
<path d="M598,76 Q612,70 636,74" stroke="#78d070" stroke-width="1.6" fill="none" opacity="0.8"/>
<path d="M597,72 Q615,66 636,73" stroke="#3a9a3a" stroke-width="0.9" fill="none"/>
<polyline points="612,62 610,87" stroke="#a04838" stroke-width="1" fill="none"/>
<polyline points="593.5,63.5 600,67 620,68.5 635,63.5 641,62" stroke="#101010" stroke-width="2.6" fill="none"/>
<polyline points="560,70.3 592,70" stroke="#2a0a2a" stroke-width="1.3" fill="none"/>
<polyline points="628,61 634,68.5" stroke="#101010" stroke-width="1.3" fill="none"/>
<g transform="translate(574.8,31.3) rotate(10)"><rect x="-6.5" y="-3.25" width="13" height="6.5" rx="1.5" fill="#e4e4e4" stroke="#0a0a0a" stroke-width="1.7"/><text x="0" y="1.9" font-size="5.4" text-anchor="middle" fill="#111" font-family="Liberation Sans">203</text></g>
<g transform="translate(661.8,34.0) rotate(12)"><rect x="-6.5" y="-3.25" width="13" height="6.5" rx="1.5" fill="#e4e4e4" stroke="#0a0a0a" stroke-width="1.7"/><text x="0" y="1.9" font-size="5.4" text-anchor="middle" fill="#111" font-family="Liberation Sans">204</text></g>
<g transform="translate(656,54.5) rotate(-20)"><rect x="-6.5" y="-3.25" width="13" height="6.5" rx="1.5" fill="#e4e4e4" stroke="#0a0a0a" stroke-width="1.7"/><text x="0" y="1.9" font-size="5.4" text-anchor="middle" fill="#111" font-family="Liberation Sans">201</text></g>
<g transform="translate(671,52.8) rotate(-20)"><rect x="-6.5" y="-3.25" width="13" height="6.5" rx="1.5" fill="#e4e4e4" stroke="#0a0a0a" stroke-width="1.7"/><text x="0" y="1.9" font-size="5.4" text-anchor="middle" fill="#111" font-family="Liberation Sans">202</text></g>
<g transform="translate(570.2,60.3) rotate(8)"><rect x="-6.5" y="-3.25" width="13" height="6.5" rx="1.5" fill="#e4e4e4" stroke="#0a0a0a" stroke-width="1.7"/><text x="0" y="1.9" font-size="5.4" text-anchor="middle" fill="#111" font-family="Liberation Sans">205</text></g>
<g transform="translate(556.6,60.5) rotate(8)"><rect x="-6.5" y="-3.25" width="13" height="6.5" rx="1.5" fill="#e4e4e4" stroke="#0a0a0a" stroke-width="1.7"/><text x="0" y="1.9" font-size="5.4" text-anchor="middle" fill="#111" font-family="Liberation Sans">206</text></g>
<rect x="591.5" y="34.5" width="6" height="12" fill="#d07040" fill-opacity="0.5" stroke="#222" stroke-width="1.1" transform="rotate(5 594.5 40.5)"/>
<rect x="633" y="34" width="6.5" height="12" fill="none" stroke="#222" stroke-width="1" transform="rotate(5 636 40)"/>
<rect x="589.5" y="68" width="6" height="19" fill="#f4f4f4" stroke="#222" stroke-width="1" transform="rotate(8 592.5 77)"/>
<line x1="591" y1="72" x2="596" y2="72" stroke="#2a8a2a" stroke-width="1.3"/>
<line x1="591" y1="76" x2="596" y2="76" stroke="#2a8a2a" stroke-width="1.3"/>
<text transform="translate(623.8,88.5) rotate(6)" font-size="6.8" fill="#2a2a2a" font-family="Liberation Sans">Pk=</text>
<text transform="translate(638,92) rotate(6)" font-size="6.8" fill="#2a2a2a" font-family="Liberation Sans">+0.00m</text>
<line x1="360.3" y1="52.5" x2="360.3" y2="65.3" stroke="#5cd05c" stroke-width="1"/>
<line x1="360.3" y1="109.6" x2="360.3" y2="117" stroke="#5cd05c" stroke-width="1"/>
<line x1="360.3" y1="65.3" x2="360.3" y2="109.1" stroke="#080808" stroke-width="1.8"/>
<text transform="translate(357.8,110.2) rotate(90)" font-size="6.7" fill="#1a1a1a" font-family="Liberation Sans">0+0.00m</text>
<text transform="translate(357.8,110.2) rotate(90)" font-size="6.7" fill="#3cb43c" font-family="Liberation Sans">0+</text>
<rect x="354.2" y="65.2" width="12.8" height="6.6" rx="1" fill="#fff" fill-opacity="0.25" stroke="#1a0a1a" stroke-width="1.1"/>
<text x="357.3" y="69.8" font-size="4" fill="#444" text-anchor="middle" font-family="Liberation Sans">P</text>
<text x="363.5" y="69.8" font-size="4" fill="#444" text-anchor="middle" font-family="Liberation Sans">1</text>
<line x1="452.8" y1="52.5" x2="452.8" y2="65.3" stroke="#5cd05c" stroke-width="1"/>
<line x1="452.8" y1="109.4" x2="452.8" y2="117" stroke="#5cd05c" stroke-width="1"/>
<line x1="452.8" y1="65.3" x2="452.8" y2="108.9" stroke="#080808" stroke-width="1.8"/>
<text transform="translate(450.3,110.2) rotate(90)" font-size="6.7" fill="#1a1a1a" font-family="Liberation Sans">0+20.00m</text>
<text transform="translate(450.3,110.2) rotate(90)" font-size="6.7" fill="#3cb43c" font-family="Liberation Sans">0+</text>
<rect x="446.7" y="66.9" width="12.8" height="6.6" rx="1" fill="#fff" fill-opacity="0.25" stroke="#1a0a1a" stroke-width="1.1"/>
<text x="449.8" y="71.5" font-size="4" fill="#444" text-anchor="middle" font-family="Liberation Sans">P</text>
<text x="456.0" y="71.5" font-size="4" fill="#444" text-anchor="middle" font-family="Liberation Sans">2</text>
<line x1="545.3" y1="52.5" x2="545.3" y2="65.0" stroke="#5cd05c" stroke-width="1"/>
<line x1="545.3" y1="108.9" x2="545.3" y2="117" stroke="#5cd05c" stroke-width="1"/>
<line x1="545.3" y1="65.0" x2="545.3" y2="108.4" stroke="#080808" stroke-width="1.8"/>
<text transform="translate(542.8,110.2) rotate(90)" font-size="6.7" fill="#1a1a1a" font-family="Liberation Sans">0+40.00m</text>
<text transform="translate(542.8,110.2) rotate(90)" font-size="6.7" fill="#3cb43c" font-family="Liberation Sans">0+</text>
<rect x="539.2" y="65.3" width="12.8" height="6.6" rx="1" fill="#fff" fill-opacity="0.25" stroke="#1a0a1a" stroke-width="1.1"/>
<text x="542.3" y="69.9" font-size="4" fill="#444" text-anchor="middle" font-family="Liberation Sans">P</text>
<text x="548.5" y="69.9" font-size="4" fill="#444" text-anchor="middle" font-family="Liberation Sans">3</text>
<line x1="637.8" y1="52.5" x2="637.8" y2="61.2" stroke="#5cd05c" stroke-width="1"/>
<line x1="637.8" y1="107.6" x2="637.8" y2="117" stroke="#5cd05c" stroke-width="1"/>
<line x1="637.8" y1="61.2" x2="637.8" y2="107.1" stroke="#080808" stroke-width="1.8"/>
<text transform="translate(635.3,110.2) rotate(90)" font-size="6.7" fill="#1a1a1a" font-family="Liberation Sans">0+60.00m</text>
<text transform="translate(635.3,110.2) rotate(90)" font-size="6.7" fill="#3cb43c" font-family="Liberation Sans">0+</text>
<rect x="631.7" y="63.6" width="12.8" height="6.6" rx="1" fill="#fff" fill-opacity="0.25" stroke="#1a0a1a" stroke-width="1.1"/>
<text x="634.8" y="68.2" font-size="4" fill="#444" text-anchor="middle" font-family="Liberation Sans">P</text>
<text x="641.0" y="68.2" font-size="4" fill="#444" text-anchor="middle" font-family="Liberation Sans">4</text>
<line x1="730.3" y1="52.5" x2="730.3" y2="62.7" stroke="#5cd05c" stroke-width="1"/>
<line x1="730.3" y1="108.0" x2="730.3" y2="117" stroke="#5cd05c" stroke-width="1"/>
<line x1="730.3" y1="62.7" x2="730.3" y2="107.5" stroke="#080808" stroke-width="1.8"/>
<text transform="translate(727.8,110.2) rotate(90)" font-size="6.7" fill="#1a1a1a" font-family="Liberation Sans">0+80.00m</text>
<text transform="translate(727.8,110.2) rotate(90)" font-size="6.7" fill="#3cb43c" font-family="Liberation Sans">0+</text>
<rect x="724.2" y="65.3" width="12.8" height="6.6" rx="1" fill="#fff" fill-opacity="0.25" stroke="#1a0a1a" stroke-width="1.1"/>
<text x="727.3" y="69.9" font-size="4" fill="#444" text-anchor="middle" font-family="Liberation Sans">P</text>
<text x="733.5" y="69.9" font-size="4" fill="#444" text-anchor="middle" font-family="Liberation Sans">5</text>
<line x1="751.4" y1="52.5" x2="751.4" y2="63.2" stroke="#5cd05c" stroke-width="1"/>
<line x1="751.4" y1="108.2" x2="751.4" y2="117" stroke="#5cd05c" stroke-width="1"/>
<line x1="751.4" y1="63.2" x2="751.4" y2="107.7" stroke="#080808" stroke-width="2.4"/>
<text transform="translate(748.9,110.2) rotate(90)" font-size="6.7" fill="#1a1a1a" font-family="Liberation Sans">0+84.57m</text>
<text transform="translate(748.9,110.2) rotate(90)" font-size="6.7" fill="#3cb43c" font-family="Liberation Sans">0+</text>
<rect x="745.3" y="65.4" width="12.8" height="6.6" rx="1" fill="#fff" fill-opacity="0.25" stroke="#1a0a1a" stroke-width="1.1"/>
<text x="748.4" y="70.0" font-size="4" fill="#444" text-anchor="middle" font-family="Liberation Sans">P</text>
<text x="754.6" y="70.0" font-size="4" fill="#444" text-anchor="middle" font-family="Liberation Sans">6</text>
<line x1="356.5" y1="86" x2="359" y2="86" stroke="#222" stroke-width="0.8"/>
<line x1="356.5" y1="100" x2="359" y2="100" stroke="#222" stroke-width="0.8"/>
<line x1="356.5" y1="104" x2="359" y2="104" stroke="#222" stroke-width="0.8"/>
<g font-family="Liberation Sans" fill="#111">
<text x="58.6" y="323.8" font-size="12.95">Axe : Axe1</text>
<text x="58.6" y="348.1" font-size="12.95">Profil dessiné par AutoPISTE</text>
<text x="58.6" y="371" font-size="9.7">Echelle en X : 1/500</text>
<text x="58.6" y="393.8" font-size="9.7">Echelle en Y : 1/100</text>
<text x="59" y="598.6" font-size="11.2">PC : 66.00 m</text>
</g>
<polygon points="360.0,287.2 361.2,287.7 362.3,288.2 363.5,288.8 364.6,289.3 365.8,289.8 366.9,290.3 368.1,290.8 369.2,291.2 370.4,291.4 371.6,291.6 372.7,291.8 373.9,292.0 375.0,292.2 376.2,292.5 377.3,292.7 378.5,292.9 379.7,293.1 380.8,293.3 382.0,293.5 383.1,293.7 384.3,293.9 385.4,294.1 386.6,294.3 387.8,294.5 388.9,294.8 390.1,295.0 391.2,295.2 392.4,295.4 393.5,295.6 394.7,295.8 395.8,296.0 397.0,296.2 398.2,296.4 399.3,296.6 400.5,296.9 401.6,297.1 402.8,297.3 403.9,297.5 405.1,297.7 406.2,297.9 407.4,298.1 408.6,298.3 409.7,298.5 410.9,298.7 412.0,299.0 413.2,299.2 414.3,299.4 415.5,299.6 416.7,299.8 417.8,300.0 419.0,300.2 420.1,300.4 421.3,300.6 422.4,300.8 423.6,301.1 424.8,301.3 425.9,301.5 427.1,301.7 428.2,301.9 429.4,302.1 430.5,302.3 431.7,302.5 432.8,302.7 434.0,302.9 435.2,303.2 436.3,303.4 437.5,303.6 438.6,303.8 439.8,304.0 440.9,304.2 442.1,304.4 443.2,304.6 444.4,304.8 445.6,305.0 446.7,305.3 447.9,305.5 449.0,305.7 450.2,305.9 451.3,306.1 452.5,306.3 453.7,306.5 454.8,306.7 456.0,306.9 457.1,307.1 458.3,307.4 459.4,307.6 460.6,307.8 461.8,308.0 462.9,308.2 464.1,308.4 465.2,308.6 466.4,308.8 467.5,309.0 468.7,309.3 469.8,309.5 471.0,309.7 472.2,309.9 473.3,310.1 474.5,310.4 475.6,310.6 476.8,310.8 477.9,311.0 479.1,311.3 480.2,311.5 481.4,311.8 482.6,312.0 483.7,312.2 484.9,312.5 486.0,312.7 487.2,313.0 488.3,313.2 489.5,313.5 490.7,313.7 491.8,314.0 493.0,314.2 494.1,314.5 495.3,314.7 496.4,315.0 497.6,315.3 498.8,315.5 499.9,315.8 501.1,316.1 502.2,316.3 503.4,316.6 504.5,316.9 505.7,317.1 506.8,317.4 508.0,317.7 509.2,318.0 510.3,318.3 511.5,318.5 512.6,318.8 513.8,319.1 514.9,319.4 516.1,319.7 517.2,320.0 518.4,320.3 519.6,320.6 520.7,320.9 521.9,321.2 523.0,321.5 524.2,321.8 525.3,322.1 526.5,322.4 527.7,322.7 528.8,323.0 530.0,323.3 531.1,323.7 532.3,324.0 533.4,324.3 534.6,324.6 535.8,324.9 536.9,325.2 538.1,325.6 539.2,325.9 540.4,326.2 541.5,326.5 542.7,326.8 543.8,327.2 545.0,327.5 546.2,327.8 547.3,328.1 548.5,328.4 549.6,328.8 550.8,329.1 551.9,329.4 553.1,329.7 554.2,330.1 555.4,330.4 556.6,330.8 557.7,331.1 558.9,331.5 560.0,331.8 561.2,332.2 562.3,332.6 563.5,333.0 564.7,333.3 565.8,333.7 567.0,334.1 568.1,334.5 569.3,335.0 570.4,335.4 571.6,335.8 572.8,336.2 573.9,336.6 575.1,337.0 576.2,337.4 577.4,337.7 578.5,338.1 579.7,338.4 580.8,338.8 582.0,339.2 583.2,339.6 584.3,340.0 585.5,340.4 586.6,340.8 587.8,341.2 588.9,341.6 590.1,342.0 591.2,342.4 592.4,343.1 593.6,343.9 594.7,344.7 595.9,345.4 597.0,346.2 598.2,346.9 599.3,347.6 600.5,348.2 601.7,348.8 602.8,349.3 604.0,349.9 605.1,350.5 606.3,351.1 607.4,351.7 608.6,352.3 609.8,352.9 610.9,353.5 612.1,354.2 613.2,354.8 614.4,355.4 615.5,356.1 616.7,356.7 617.8,357.4 619.0,358.0 620.2,358.7 621.3,359.4 622.5,360.0 623.6,360.7 624.8,361.4 625.9,362.1 627.1,362.8 628.2,363.5 629.4,364.2 630.6,364.9 631.7,365.6 632.9,366.3 634.0,367.0 635.2,367.8 636.3,368.5 637.5,369.2 638.7,370.0 639.8,370.7 641.0,371.5 642.1,372.3 643.3,373.1 644.4,373.9 645.6,374.7 646.8,375.5 647.9,376.4 649.1,377.2 650.2,378.1 651.4,379.0 652.5,379.9 653.7,380.8 654.8,381.7 656.0,382.7 657.2,383.6 658.3,384.6 659.5,385.5 660.6,386.5 661.8,387.5 662.9,388.5 664.1,389.6 665.2,390.4 666.4,391.3 667.6,392.1 668.7,393.2 669.9,394.4 671.0,395.5 672.2,396.7 673.3,397.9 674.5,399.0 675.7,400.2 676.8,401.4 678.0,402.5 679.1,403.7 680.3,404.8 681.4,406.0 682.6,407.2 683.8,408.3 684.9,409.5 686.1,410.7 687.2,411.9 688.4,413.2 689.5,414.4 690.7,415.7 691.8,416.9 693.0,418.2 694.2,419.4 695.3,420.7 696.5,421.9 697.6,423.2 698.8,424.5 699.9,425.7 701.1,427.0 702.2,428.2 703.4,429.5 704.6,430.7 705.7,432.0 706.9,433.2 708.0,434.5 709.2,435.7 710.3,437.0 711.5,438.2 712.7,439.5 713.8,440.8 715.0,442.0 716.1,443.3 717.3,444.5 718.4,445.8 719.6,447.0 720.8,448.3 721.9,449.5 723.1,450.8 724.2,452.0 725.4,453.3 726.5,454.5 727.7,455.8 728.8,457.0 730.0,458.3 731.2,459.7 732.3,461.1 733.5,462.4 734.6,463.7 735.8,464.9 736.9,466.1 738.1,467.4 739.2,468.6 740.4,469.9 741.6,471.1 742.7,472.4 743.9,473.6 745.0,474.8 746.2,476.1 747.3,477.3 748.5,478.6 749.7,479.8 750.8,481.1 751.1,481.4 751.1,484.0 750.8,483.6 749.7,482.2 748.5,480.8 747.3,479.4 746.2,478.0 745.0,476.6 743.9,475.2 742.7,473.8 741.6,472.4 740.4,471.0 739.2,469.6 738.1,468.2 736.9,466.7 735.8,465.3 734.6,463.9 733.5,462.5 732.3,461.2 731.2,459.9 730.0,458.7 728.8,457.4 727.7,456.2 726.5,455.0 725.4,453.7 724.2,452.5 723.1,451.2 721.9,450.0 720.8,448.8 719.6,447.5 718.4,446.3 717.3,445.0 716.1,443.8 715.0,442.5 713.8,441.3 712.7,440.1 711.5,438.8 710.3,437.6 709.2,436.3 708.0,435.1 706.9,433.8 705.7,432.6 704.6,431.4 703.4,430.1 702.2,428.9 701.1,427.6 699.9,426.4 698.8,425.1 697.6,423.9 696.5,422.7 695.3,421.4 694.2,420.2 693.0,418.9 691.8,417.7 690.7,416.4 689.5,415.2 688.4,414.0 687.2,412.7 686.1,411.5 684.9,410.2 683.8,409.0 682.6,407.7 681.4,406.5 680.3,405.3 679.1,404.1 678.0,402.9 676.8,401.7 675.7,400.5 674.5,399.4 673.3,398.2 672.2,397.1 671.0,396.0 669.9,394.9 668.7,393.8 667.6,392.7 666.4,391.7 665.2,390.6 664.1,389.6 662.9,388.7 661.8,387.8 660.6,387.0 659.5,386.1 658.3,385.3 657.2,384.4 656.0,383.6 654.8,382.7 653.7,381.9 652.5,381.0 651.4,380.1 650.2,379.3 649.1,378.4 647.9,377.6 646.8,376.7 645.6,375.9 644.4,375.0 643.3,374.2 642.1,373.3 641.0,372.4 639.8,371.6 638.7,370.7 637.5,369.9 636.3,369.2 635.2,368.5 634.0,367.9 632.9,367.2 631.7,366.6 630.6,365.9 629.4,365.2 628.2,364.6 627.1,363.9 625.9,363.2 624.8,362.6 623.6,361.9 622.5,361.3 621.3,360.6 620.2,359.9 619.0,359.3 617.8,358.6 616.7,358.0 615.5,357.3 614.4,356.6 613.2,355.9 612.1,355.2 610.9,354.5 609.8,353.9 608.6,353.2 607.4,352.5 606.3,351.8 605.1,351.1 604.0,350.4 602.8,349.7 601.7,349.0 600.5,348.3 599.3,347.6 598.2,347.1 597.0,346.5 595.9,346.0 594.7,345.4 593.6,344.9 592.4,344.4 591.2,343.8 590.1,343.3 588.9,342.8 587.8,342.3 586.6,341.8 585.5,341.3 584.3,340.8 583.2,340.3 582.0,339.8 580.8,339.4 579.7,338.9 578.5,338.4 577.4,338.0 576.2,337.5 575.1,337.1 573.9,336.7 572.8,336.3 571.6,336.0 570.4,335.6 569.3,335.3 568.1,334.9 567.0,334.6 565.8,334.2 564.7,333.9 563.5,333.6 562.3,333.2 561.2,332.9 560.0,332.5 558.9,332.2 557.7,331.8 556.6,331.5 555.4,331.1 554.2,330.8 553.1,330.4 551.9,330.1 550.8,329.7 549.6,329.4 548.5,329.0 547.3,328.7 546.2,328.3 545.0,328.0 543.8,327.7 542.7,327.4 541.5,327.1 540.4,326.8 539.2,326.4 538.1,326.1 536.9,325.8 535.8,325.5 534.6,325.2 533.4,324.9 532.3,324.6 531.1,324.3 530.0,324.0 528.8,323.7 527.7,323.3 526.5,323.0 525.3,322.7 524.2,322.4 523.0,322.1 521.9,321.8 520.7,321.5 519.6,321.2 518.4,320.9 517.2,320.6 516.1,320.2 514.9,319.9 513.8,319.6 512.6,319.3 511.5,319.0 510.3,318.7 509.2,318.4 508.0,318.1 506.8,317.8 505.7,317.6 504.5,317.5 503.4,317.3 502.2,317.2 501.1,317.0 499.9,316.9 498.8,316.7 497.6,316.6 496.4,316.4 495.3,316.3 494.1,316.1 493.0,316.0 491.8,315.8 490.7,315.7 489.5,315.5 488.3,315.4 487.2,315.2 486.0,315.1 484.9,314.9 483.7,314.8 482.6,314.6 481.4,314.5 480.2,314.3 479.1,314.2 477.9,314.0 476.8,313.9 475.6,313.7 474.5,313.6 473.3,313.4 472.2,313.3 471.0,313.1 469.8,313.0 468.7,312.8 467.5,312.7 466.4,312.5 465.2,312.4 464.1,312.2 462.9,312.1 461.8,312.0 460.6,311.8 459.4,311.7 458.3,311.5 457.1,311.4 456.0,311.2 454.8,311.1 453.7,310.9 452.5,310.8 451.3,310.6 450.2,310.4 449.0,310.2 447.9,310.0 446.7,309.7 445.6,309.5 444.4,309.3 443.2,309.1 442.1,308.9 440.9,308.7 439.8,308.5 438.6,308.2 437.5,308.0 436.3,307.8 435.2,307.6 434.0,307.4 432.8,307.2 431.7,307.0 430.5,306.7 429.4,306.5 428.2,306.3 427.1,306.1 425.9,305.9 424.8,305.7 423.6,305.4 422.4,305.2 421.3,305.0 420.1,304.8 419.0,304.6 417.8,304.4 416.7,304.2 415.5,303.9 414.3,303.7 413.2,303.5 412.0,303.3 410.9,303.1 409.7,302.9 408.6,302.7 407.4,302.4 406.2,302.2 405.1,302.0 403.9,301.8 402.8,301.6 401.6,301.4 400.5,301.0 399.3,300.7 398.2,300.3 397.0,300.0 395.8,299.6 394.7,299.3 393.5,298.9 392.4,298.6 391.2,298.2 390.1,297.8 388.9,297.5 387.8,297.1 386.6,296.8 385.4,296.4 384.3,296.1 383.1,295.7 382.0,295.3 380.8,295.0 379.7,294.6 378.5,294.3 377.3,293.9 376.2,293.6 375.0,293.2 373.9,292.9 372.7,292.5 371.6,292.1 370.4,291.8 369.2,291.4 368.1,291.0 366.9,290.8 365.8,290.6 364.6,290.4 363.5,290.1 362.3,289.9 361.2,289.7 360.0,289.5" fill="#f08884" stroke="none"/>
<line x1="360.0" y1="287.2" x2="360.0" y2="601.7" stroke="#5e5e5e" stroke-width="1.5"/>
<line x1="452.5" y1="311.2" x2="452.5" y2="601.7" stroke="#111" stroke-width="1.1"/>
<line x1="545.0" y1="328.6" x2="545.0" y2="601.7" stroke="#5e5e5e" stroke-width="1.5"/>
<line x1="637.5" y1="370.2" x2="637.5" y2="601.7" stroke="#111" stroke-width="1.1"/>
<line x1="730.0" y1="458.3" x2="730.0" y2="601.7" stroke="#555" stroke-width="1.4"/>
<line x1="751.1" y1="484.9" x2="751.1" y2="601.7" stroke="#555" stroke-width="1.4"/>
<polyline points="360.0,287.2 369.8,291.6 401.3,301.3 451.3,310.6 507.0,317.8 545.0,328.0 580.0,338.5 591.5,342.5 597.0,346.2 615.0,357.0 637.4,369.8 667.8,392.3 686.0,410.6 730.0,458.3 751.1,484.0" fill="none" stroke="#c0f090" stroke-width="3.2" opacity="0.5"/>
<polyline points="360.0,289.5 361.2,289.7 362.3,289.9 363.5,290.1 364.6,290.4 365.8,290.6 366.9,290.8 368.1,291.0 369.2,291.2 370.4,291.4 371.6,291.6 372.7,291.8 373.9,292.0 375.0,292.2 376.2,292.5 377.3,292.7 378.5,292.9 379.7,293.1 380.8,293.3 382.0,293.5 383.1,293.7 384.3,293.9 385.4,294.1 386.6,294.3 387.8,294.5 388.9,294.8 390.1,295.0 391.2,295.2 392.4,295.4 393.5,295.6 394.7,295.8 395.8,296.0 397.0,296.2 398.2,296.4 399.3,296.6 400.5,296.9 401.6,297.1 402.8,297.3 403.9,297.5 405.1,297.7 406.2,297.9 407.4,298.1 408.6,298.3 409.7,298.5 410.9,298.7 412.0,299.0 413.2,299.2 414.3,299.4 415.5,299.6 416.7,299.8 417.8,300.0 419.0,300.2 420.1,300.4 421.3,300.6 422.4,300.8 423.6,301.1 424.8,301.3 425.9,301.5 427.1,301.7 428.2,301.9 429.4,302.1 430.5,302.3 431.7,302.5 432.8,302.7 434.0,302.9 435.2,303.2 436.3,303.4 437.5,303.6 438.6,303.8 439.8,304.0 440.9,304.2 442.1,304.4 443.2,304.6 444.4,304.8 445.6,305.0 446.7,305.3 447.9,305.5 449.0,305.7 450.2,305.9 451.3,306.1 452.5,306.3 453.7,306.5 454.8,306.7 456.0,306.9 457.1,307.1 458.3,307.4 459.4,307.6 460.6,307.8 461.8,308.0 462.9,308.2 464.1,308.4 465.2,308.6 466.4,308.8 467.5,309.0 468.7,309.3 469.8,309.5 471.0,309.7 472.2,309.9 473.3,310.1 474.5,310.4 475.6,310.6 476.8,310.8 477.9,311.0 479.1,311.3 480.2,311.5 481.4,311.8 482.6,312.0 483.7,312.2 484.9,312.5 486.0,312.7 487.2,313.0 488.3,313.2 489.5,313.5 490.7,313.7 491.8,314.0 493.0,314.2 494.1,314.5 495.3,314.7 496.4,315.0 497.6,315.3 498.8,315.5 499.9,315.8 501.1,316.1 502.2,316.3 503.4,316.6 504.5,316.9 505.7,317.1 506.8,317.4 508.0,317.7 509.2,318.0 510.3,318.3 511.5,318.5 512.6,318.8 513.8,319.1 514.9,319.4 516.1,319.7 517.2,320.0 518.4,320.3 519.6,320.6 520.7,320.9 521.9,321.2 523.0,321.5 524.2,321.8 525.3,322.1 526.5,322.4 527.7,322.7 528.8,323.0 530.0,323.3 531.1,323.7 532.3,324.0 533.4,324.3 534.6,324.6 535.8,324.9 536.9,325.2 538.1,325.6 539.2,325.9 540.4,326.2 541.5,326.5 542.7,326.8 543.8,327.2 545.0,327.5 546.2,327.8 547.3,328.1 548.5,328.4 549.6,328.8 550.8,329.1 551.9,329.4 553.1,329.7 554.2,330.1 555.4,330.4 556.6,330.8 557.7,331.1 558.9,331.5 560.0,331.8 561.2,332.2 562.3,332.6 563.5,333.0 564.7,333.3 565.8,333.7 567.0,334.1 568.1,334.5 569.3,335.0 570.4,335.4 571.6,335.8 572.8,336.2 573.9,336.6 575.1,337.1 576.2,337.5 577.4,338.0 578.5,338.4 579.7,338.9 580.8,339.4 582.0,339.8 583.2,340.3 584.3,340.8 585.5,341.3 586.6,341.8 587.8,342.3 588.9,342.8 590.1,343.3 591.2,343.8 592.4,344.4 593.6,344.9 594.7,345.4 595.9,346.0 597.0,346.5 598.2,347.1 599.3,347.6 600.5,348.2 601.7,348.8 602.8,349.3 604.0,349.9 605.1,350.5 606.3,351.1 607.4,351.7 608.6,352.3 609.8,352.9 610.9,353.5 612.1,354.2 613.2,354.8 614.4,355.4 615.5,356.1 616.7,356.7 617.8,357.4 619.0,358.0 620.2,358.7 621.3,359.4 622.5,360.0 623.6,360.7 624.8,361.4 625.9,362.1 627.1,362.8 628.2,363.5 629.4,364.2 630.6,364.9 631.7,365.6 632.9,366.3 634.0,367.0 635.2,367.8 636.3,368.5 637.5,369.2 638.7,370.0 639.8,370.7 641.0,371.5 642.1,372.3 643.3,373.1 644.4,373.9 645.6,374.7 646.8,375.5 647.9,376.4 649.1,377.2 650.2,378.1 651.4,379.0 652.5,379.9 653.7,380.8 654.8,381.7 656.0,382.7 657.2,383.6 658.3,384.6 659.5,385.5 660.6,386.5 661.8,387.5 662.9,388.5 664.1,389.6 665.2,390.6 666.4,391.7 667.6,392.7 668.7,393.8 669.9,394.9 671.0,396.0 672.2,397.1 673.3,398.2 674.5,399.4 675.7,400.5 676.8,401.7 678.0,402.9 679.1,404.1 680.3,405.3 681.4,406.5 682.6,407.7 683.8,409.0 684.9,410.2 686.1,411.5 687.2,412.7 688.4,414.0 689.5,415.2 690.7,416.4 691.8,417.7 693.0,418.9 694.2,420.2 695.3,421.4 696.5,422.7 697.6,423.9 698.8,425.1 699.9,426.4 701.1,427.6 702.2,428.9 703.4,430.1 704.6,431.4 705.7,432.6 706.9,433.8 708.0,435.1 709.2,436.3 710.3,437.6 711.5,438.8 712.7,440.1 713.8,441.3 715.0,442.5 716.1,443.8 717.3,445.0 718.4,446.3 719.6,447.5 720.8,448.8 721.9,450.0 723.1,451.2 724.2,452.5 725.4,453.7 726.5,455.0 727.7,456.2 728.8,457.4 730.0,458.7 731.2,459.9 732.3,461.2 733.5,462.4 734.6,463.7 735.8,464.9 736.9,466.1 738.1,467.4 739.2,468.6 740.4,469.9 741.6,471.1 742.7,472.4 743.9,473.6 745.0,474.8 746.2,476.1 747.3,477.3 748.5,478.6 749.7,479.8 750.8,481.1 751.1,481.4" fill="none" stroke="#e88a80" stroke-width="2.2"/>
<polyline points="360.0,287.2 369.8,291.6 401.3,301.3 451.3,310.6 507.0,317.8 545.0,328.0 580.0,338.5 591.5,342.5 597.0,346.2 615.0,357.0 637.4,369.8 667.8,392.3 686.0,410.6 730.0,458.3 751.1,484.0" fill="none" stroke="#86905a" stroke-width="1.9"/>
<polyline points="686,410.6 730,458.3" fill="none" stroke="#78e060" stroke-width="2.2" opacity="0.8"/>
<polyline points="686,410.6 730,458.3" fill="none" stroke="#3a7a2a" stroke-width="1.1"/>
<polyline points="575,336.8 591.5,342.5 597,346.2" fill="none" stroke="#78e060" stroke-width="2.2" opacity="0.8"/>
<polyline points="575,336.8 591.5,342.5 597,346.2" fill="none" stroke="#3a7a2a" stroke-width="1.1"/>
<polyline points="360,287.2 369.8,291.6 380,294.8" fill="none" stroke="#90f070" stroke-width="2.4" opacity="0.6"/>
<polyline points="360,287.2 369.8,291.6 380,294.8" fill="none" stroke="#3a6a2a" stroke-width="1.2"/>
<g fill="none" stroke="#1a1a1a">
<line x1="58.8" y1="601.70" x2="774.9000000000001" y2="601.70" stroke-width="1.4"/>
<line x1="58.8" y1="624.80" x2="774.9000000000001" y2="624.80" stroke-width="1.4"/>
<line x1="58.8" y1="647.90" x2="774.9000000000001" y2="647.90" stroke-width="1.4"/>
<line x1="58.8" y1="671.00" x2="774.9000000000001" y2="671.00" stroke-width="1.4"/>
<line x1="58.8" y1="694.10" x2="774.9000000000001" y2="694.10" stroke-width="1.4"/>
<line x1="58.8" y1="717.20" x2="774.9000000000001" y2="717.20" stroke-width="1.4"/>
<line x1="58.8" y1="740.30" x2="774.9000000000001" y2="740.30" stroke-width="1.4"/>
<line x1="58.8" y1="763.40" x2="774.9000000000001" y2="763.40" stroke-width="1.4"/>
<line x1="58.8" y1="786.50" x2="774.9000000000001" y2="786.50" stroke-width="1.4"/>
<line x1="58.8" y1="809.60" x2="774.9000000000001" y2="809.60" stroke-width="1.4"/>
<line x1="58.8" y1="832.70" x2="774.9000000000001" y2="832.70" stroke-width="1.4"/>
<line x1="58.8" y1="855.80" x2="774.9000000000001" y2="855.80" stroke-width="1.4"/>
<line x1="59.5" y1="601.7" x2="59.5" y2="855.8000000000001" stroke-width="1.4"/>
<line x1="774.2" y1="601.7" x2="774.2" y2="855.8000000000001" stroke-width="1.4"/>
<line x1="336.8" y1="601.7" x2="336.8" y2="855.8000000000001" stroke-width="1.8"/>
</g>
<g font-family="Liberation Sans" font-size="11.3">
<text x="61.2" y="617.0" fill="#141414">Numéro de profils en travers</text>
<text x="61.2" y="640.1" fill="#3fcf3f">Altitudes TN</text>
<text x="61.2" y="663.2" fill="#c03434">Altitudes Projet</text>
<text x="61.2" y="686.3" fill="#3cd8e8">Ecarts Projet - TN</text>
<text x="61.2" y="710.3" fill="#141414">Abcisses</text>
<text x="61.2" y="732.5" fill="#141414">Distances partielles</text>
<text x="61.2" y="755.6" fill="#141414">Pentes et rampes</text>
<text x="61.2" y="778.7" fill="#141414">Alignements droits et courbes</text>
<text x="61.2" y="801.8" fill="#cc48cc">Dévers Gauche</text>
<text x="61.2" y="824.9" fill="#2a2ab8">Dévers Droit</text>
<text x="61.2" y="848.9" fill="#141414">Graphique des dévers</text>
</g>
<g font-family="Liberation Sans">
<text transform="translate(362.16,618.30) rotate(-90)" fill="#1a1a1a" font-size="6.0">P01</text>
<text transform="translate(454.66,618.30) rotate(-90)" fill="#1a1a1a" font-size="6.0">P02</text>
<text transform="translate(547.16,618.30) rotate(-90)" fill="#1a1a1a" font-size="6.0">P03</text>
<text transform="translate(639.66,618.30) rotate(-90)" fill="#1a1a1a" font-size="6.0">P04</text>
<text transform="translate(732.16,618.30) rotate(-90)" fill="#1a1a1a" font-size="6.0">P05</text>
<text transform="translate(753.30,618.30) rotate(-90)" fill="#1a1a1a" font-size="6.0">P06</text>
<text transform="translate(362.16,645.30) rotate(-90)" fill="#40c840" font-size="6.0">79.60</text>
<text transform="translate(454.66,645.30) rotate(-90)" fill="#40c840" font-size="6.0">78.56</text>
<text transform="translate(547.16,645.30) rotate(-90)" fill="#40c840" font-size="6.0">77.81</text>
<text transform="translate(639.66,645.30) rotate(-90)" fill="#40c840" font-size="6.0">76.01</text>
<text transform="translate(732.16,645.30) rotate(-90)" fill="#40c840" font-size="6.0">72.20</text>
<text transform="translate(753.30,645.30) rotate(-90)" fill="#40c840" font-size="6.0">71.05</text>
<text transform="translate(362.16,668.70) rotate(-90)" fill="#c03030" font-size="6.0">79.50</text>
<text transform="translate(454.66,668.70) rotate(-90)" fill="#c03030" font-size="6.0">78.77</text>
<text transform="translate(466.22,668.70) rotate(-90)" fill="#c03030" font-size="6.0">78.68</text>
<text transform="translate(535.60,668.70) rotate(-90)" fill="#c03030" font-size="6.0">77.99</text>
<text transform="translate(547.16,668.70) rotate(-90)" fill="#c03030" font-size="6.0">77.86</text>
<text transform="translate(552.71,668.70) rotate(-90)" fill="#c03030" font-size="6.0">77.79</text>
<text transform="translate(631.71,668.70) rotate(-90)" fill="#c03030" font-size="6.0">76.26</text>
<text transform="translate(637.44,668.70) rotate(-90)" fill="#c03030" font-size="6.0">76.11</text>
<text transform="translate(685.08,668.70) rotate(-90)" fill="#c03030" font-size="6.0">74.37</text>
<text transform="translate(732.16,668.70) rotate(-90)" fill="#c03030" font-size="6.0">72.18</text>
<text transform="translate(753.30,668.70) rotate(-90)" fill="#c03030" font-size="6.0">71.20</text>
<text transform="translate(362.16,692.00) rotate(-90)" fill="#38d4e8" font-size="6.0">-0.10</text>
<text transform="translate(454.66,692.00) rotate(-90)" fill="#38d4e8" font-size="6.0">0.21</text>
<text transform="translate(466.22,692.00) rotate(-90)" fill="#38d4e8" font-size="6.0">0.21</text>
<text transform="translate(535.60,692.00) rotate(-90)" fill="#38d4e8" font-size="6.0">0.05</text>
<text transform="translate(547.16,692.00) rotate(-90)" fill="#38d4e8" font-size="6.0">0.05</text>
<text transform="translate(552.71,692.00) rotate(-90)" fill="#38d4e8" font-size="6.0">0.08</text>
<text transform="translate(631.71,692.00) rotate(-90)" fill="#38d4e8" font-size="6.0">0.04</text>
<text transform="translate(637.44,692.00) rotate(-90)" fill="#38d4e8" font-size="6.0">0.02</text>
<text transform="translate(685.08,692.00) rotate(-90)" fill="#38d4e8" font-size="6.0">0.03</text>
<text transform="translate(732.16,692.00) rotate(-90)" fill="#38d4e8" font-size="6.0">-0.02</text>
<text transform="translate(753.30,692.00) rotate(-90)" fill="#38d4e8" font-size="6.0">0.15</text>
<text transform="translate(362.16,715.10) rotate(-90)" fill="#1a1a1a" font-size="6.0">0+0.00</text>
<text transform="translate(454.66,715.10) rotate(-90)" fill="#1a1a1a" font-size="6.0">0+20.00</text>
<text transform="translate(466.22,715.10) rotate(-90)" fill="#1a1a1a" font-size="6.0">0+22.50</text>
<text transform="translate(535.60,715.10) rotate(-90)" fill="#1a1a1a" font-size="6.0">0+37.50</text>
<text transform="translate(547.16,715.10) rotate(-90)" fill="#1a1a1a" font-size="6.0">0+40.00</text>
<text transform="translate(552.71,715.10) rotate(-90)" fill="#1a1a1a" font-size="6.0">0+41.20</text>
<text transform="translate(631.71,715.10) rotate(-90)" fill="#1a1a1a" font-size="6.0">0+58.28</text>
<text transform="translate(637.44,715.10) rotate(-90)" fill="#1a1a1a" font-size="6.0">0+59.52</text>
<text transform="translate(685.08,715.10) rotate(-90)" fill="#1a1a1a" font-size="6.0">0+69.82</text>
<text transform="translate(732.16,715.10) rotate(-90)" fill="#1a1a1a" font-size="6.0">0+80.00</text>
<text transform="translate(753.30,715.10) rotate(-90)" fill="#1a1a1a" font-size="6.0">0+84.57</text>
<text transform="translate(362.16,807.00) rotate(-90)" fill="#d848d8" font-size="6.0">2.50</text>
<text transform="translate(362.16,829.90) rotate(-90)" fill="#2a2aa8" font-size="6.0">-2.50</text>
<text transform="translate(454.66,807.00) rotate(-90)" fill="#d848d8" font-size="6.0">2.50</text>
<text transform="translate(454.66,829.90) rotate(-90)" fill="#2a2aa8" font-size="6.0">-2.50</text>
<text transform="translate(547.16,807.00) rotate(-90)" fill="#d848d8" font-size="6.0">2.50</text>
<text transform="translate(547.16,829.90) rotate(-90)" fill="#2a2aa8" font-size="6.0">-2.50</text>
<text transform="translate(639.66,807.00) rotate(-90)" fill="#d848d8" font-size="6.0">2.50</text>
<text transform="translate(639.66,829.90) rotate(-90)" fill="#2a2aa8" font-size="6.0">-2.50</text>
<text transform="translate(732.16,807.00) rotate(-90)" fill="#d848d8" font-size="6.0">2.50</text>
<text transform="translate(732.16,829.90) rotate(-90)" fill="#2a2aa8" font-size="6.0">-2.50</text>
<text transform="translate(753.30,807.00) rotate(-90)" fill="#d848d8" font-size="6.0">2.50</text>
<text transform="translate(753.30,829.90) rotate(-90)" fill="#2a2aa8" font-size="6.0">-2.50</text>
</g>
<g fill="none">
<line x1="360.00" y1="717.20" x2="360.00" y2="740.30" stroke="#b84040" stroke-width="1.15"/>
<line x1="452.50" y1="717.20" x2="452.50" y2="740.30" stroke="#111" stroke-width="1.15"/>
<line x1="464.06" y1="717.20" x2="464.06" y2="740.30" stroke="#b84040" stroke-width="1.15"/>
<line x1="533.44" y1="717.20" x2="533.44" y2="740.30" stroke="#b84040" stroke-width="1.15"/>
<line x1="545.00" y1="717.20" x2="545.00" y2="740.30" stroke="#8a2a2a" stroke-width="1.15"/>
<line x1="550.55" y1="717.20" x2="550.55" y2="740.30" stroke="#b84040" stroke-width="1.15"/>
<line x1="629.55" y1="717.20" x2="629.55" y2="740.30" stroke="#b84040" stroke-width="1.15"/>
<line x1="635.28" y1="717.20" x2="635.28" y2="740.30" stroke="#b84040" stroke-width="1.15"/>
<line x1="682.92" y1="717.20" x2="682.92" y2="740.30" stroke="#b84040" stroke-width="1.15"/>
<line x1="730.00" y1="717.20" x2="730.00" y2="740.30" stroke="#8a2a2a" stroke-width="1.15"/>
<line x1="751.14" y1="717.20" x2="751.14" y2="740.30" stroke="#b84040" stroke-width="1.15"/>
<line x1="360.00" y1="740.30" x2="360.00" y2="763.40" stroke="#b84040" stroke-width="1.1"/>
<line x1="464.06" y1="740.30" x2="464.06" y2="763.40" stroke="#b84040" stroke-width="1.1"/>
<line x1="533.44" y1="740.30" x2="533.44" y2="763.40" stroke="#b84040" stroke-width="1.1"/>
<line x1="550.55" y1="740.30" x2="550.55" y2="763.40" stroke="#b84040" stroke-width="1.1"/>
<line x1="629.55" y1="740.30" x2="629.55" y2="763.40" stroke="#b84040" stroke-width="1.1"/>
<line x1="635.28" y1="740.30" x2="635.28" y2="763.40" stroke="#b84040" stroke-width="1.1"/>
<line x1="682.92" y1="740.30" x2="682.92" y2="763.40" stroke="#b84040" stroke-width="1.1"/>
<line x1="751.14" y1="740.30" x2="751.14" y2="763.40" stroke="#b84040" stroke-width="1.1"/>
<path d="M466.36,761.0 L466.36,752.4 Q466.36,742.4 476.36,742.4 L521.14,742.4 Q531.14,742.4 531.14,752.4 L531.14,761.0" stroke="#151515" stroke-width="1.1"/>
<path d="M552.55,761.0 L552.55,752.4 Q552.55,742.4 562.55,742.4 L617.45,742.4 Q627.45,742.4 627.45,752.4 L627.45,761.0" stroke="#151515" stroke-width="1.1"/>
<line x1="362" y1="742.2" x2="365.5" y2="743.8" stroke="#222" stroke-width="1"/>
<line x1="458.5" y1="759.5" x2="462" y2="761" stroke="#222" stroke-width="1"/>
<line x1="360" y1="763.40" x2="360" y2="786.50" stroke="#1a1a1a" stroke-width="1.3"/>
<line x1="402.2" y1="763.40" x2="402.2" y2="786.50" stroke="#1a1a1a" stroke-width="1.3"/>
<line x1="420.3" y1="763.40" x2="420.3" y2="786.50" stroke="#1a1a1a" stroke-width="1.3"/>
<line x1="434.9" y1="763.40" x2="434.9" y2="786.50" stroke="#1a1a1a" stroke-width="1.3"/>
<line x1="477.2" y1="763.40" x2="477.2" y2="786.50" stroke="#1a1a1a" stroke-width="1.3"/>
<line x1="501.5" y1="763.40" x2="501.5" y2="786.50" stroke="#1a1a1a" stroke-width="1.3"/>
<line x1="525.1" y1="763.40" x2="525.1" y2="786.50" stroke="#1a1a1a" stroke-width="1.3"/>
<line x1="580.5" y1="763.40" x2="580.5" y2="786.50" stroke="#1a1a1a" stroke-width="1.3"/>
<line x1="587.3" y1="763.40" x2="587.3" y2="786.50" stroke="#1a1a1a" stroke-width="1.3"/>
<line x1="625.8" y1="763.40" x2="625.8" y2="786.50" stroke="#1a1a1a" stroke-width="1.3"/>
<line x1="632.3" y1="763.40" x2="632.3" y2="786.50" stroke="#1a1a1a" stroke-width="1.3"/>
<line x1="647.8" y1="763.40" x2="647.8" y2="786.50" stroke="#1a1a1a" stroke-width="1.3"/>
<line x1="685.3" y1="763.40" x2="685.3" y2="786.50" stroke="#1a1a1a" stroke-width="1.3"/>
<line x1="751.1" y1="763.40" x2="751.1" y2="786.50" stroke="#1a1a1a" stroke-width="1.3"/>
<line x1="360" y1="775" x2="751.1" y2="775" stroke="#1a1a1a" stroke-width="1.2"/>
<line x1="501.5" y1="768" x2="525.1" y2="768" stroke="#1a1a1a" stroke-width="1"/>
<line x1="580.5" y1="770" x2="587.3" y2="770" stroke="#1a1a1a" stroke-width="1"/>
<line x1="360" y1="837.3" x2="751.1" y2="837.3" stroke="#c048c0" stroke-width="1.1"/>
<line x1="360" y1="844.2" x2="751.1" y2="844.2" stroke="#151515" stroke-width="1.05"/>
<line x1="360" y1="851" x2="751.1" y2="851" stroke="#20207a" stroke-width="1.2" stroke-dasharray="1.8,0.7"/>
<line x1="360.00" y1="832.70" x2="360.00" y2="855.80" stroke="#111" stroke-width="1.8"/>
<line x1="452.50" y1="832.70" x2="452.50" y2="855.80" stroke="#111" stroke-width="1.8"/>
<line x1="545.00" y1="832.70" x2="545.00" y2="855.80" stroke="#111" stroke-width="1.8"/>
<line x1="637.50" y1="832.70" x2="637.50" y2="855.80" stroke="#111" stroke-width="1.8"/>
<line x1="730.00" y1="832.70" x2="730.00" y2="855.80" stroke="#111" stroke-width="1.8"/>
<line x1="751.14" y1="832.70" x2="751.14" y2="855.80" stroke="#111" stroke-width="1.8"/>
</g>
<g font-family="Liberation Sans" font-size="5.8" fill="#222" text-anchor="middle" style="white-space:pre" stroke="#222" stroke-width="0.15">
<text x="406.25" y="731.10">20.00</text>
<text x="458.28" y="731.10">2.50</text>
<text x="498.75" y="731.10">15.00</text>
<text x="539.22" y="731.10">2.50</text>
<text x="590.05" y="731.10">17.08</text>
<text x="659.10" y="731.10">10.29</text>
<text x="706.46" y="731.10">10.18</text>
<text x="740.57" y="731.10">4.57</text>
<text transform="translate(549.88,732.80) rotate(-90)">1.20</text>
<text transform="translate(634.51,732.80) rotate(-90)">1.24</text>
<text x="412.03" y="754.10">PENTE&#160; L = 22.50 m&#160; P = -3.63&#160; %</text>
<text x="498.75" y="754.10">RP = -789.51&#160; L = 15.00</text>
<text x="590.05" y="754.10">RP = -251.28&#160; L = 17.08</text>
<text x="541.99" y="746.20" font-size="2.9">PENTE</text>
<text x="541.99" y="753.20" font-size="2.9">L = 3.70 m</text>
<text x="541.99" y="760.20" font-size="2.9">P = -5.53 %</text>
<text x="659.10" y="750.00">RP = -112.38</text>
<text x="659.10" y="759.00">L = 10.29</text>
<text x="717.03" y="746.70">PENTE</text>
<text x="717.03" y="753.80">L = 14.75 m</text>
<text x="717.03" y="760.80">P = -21.49&#160; %</text>
<text x="381.10" y="774.00" font-size="5.6">DROITE</text>
<text x="381.10" y="780.60" font-size="5.6">L = 9.18 m</text>
<text x="411.25" y="774.00" font-size="2.9">R = 1208.88 m</text>
<text x="411.25" y="780.60" font-size="2.9">L = 3.88 m</text>
<text x="427.60" y="774.00" font-size="2.9">DROITE</text>
<text x="427.60" y="780.60" font-size="2.9">L = 3.13 m</text>
<text x="456.05" y="774.00" font-size="5.8">R = 267.96 m</text>
<text x="456.05" y="780.60" font-size="5.8">L = 9.16 m</text>
<text x="489.35" y="774.00" font-size="4.5">DROITE</text>
<text x="489.35" y="780.60" font-size="4.5">L = 5.31 m</text>
<text x="552.80" y="774.00" font-size="5.8">DROITE</text>
<text x="552.80" y="780.60" font-size="5.8">L = 12.07 m</text>
<text x="606.55" y="774.00" font-size="5.8">DROITE</text>
<text x="606.55" y="780.60" font-size="5.8">L = 8.21 m</text>
<text x="640.05" y="774.00" font-size="3.0">DROITE</text>
<text x="640.05" y="780.60" font-size="3.0">L = 3.33 m</text>
<text x="666.55" y="774.00" font-size="5.8">R = 224.10 m</text>
<text x="666.55" y="780.60" font-size="5.8">L = 8.07 m</text>
<text x="718.20" y="774.00" font-size="5.8">DROITE</text>
<text x="718.20" y="780.60" font-size="5.8">L = 14.23 m</text>
<text x="513.30" y="767.00" font-size="2.9">R = -1608.64 m</text>
<text x="513.30" y="771.60" font-size="2.9">L = 5.83 m</text>
</g>
<g font-family="Liberation Sans" font-size="5.8" fill="#222" text-anchor="end">
<text x="357.6" y="840.0">2.50 %</text>
<text x="357.6" y="846.6">0.00 %</text>
<text x="357.6" y="853.2">-2.50 %</text>
</g>
</svg></body></html>
